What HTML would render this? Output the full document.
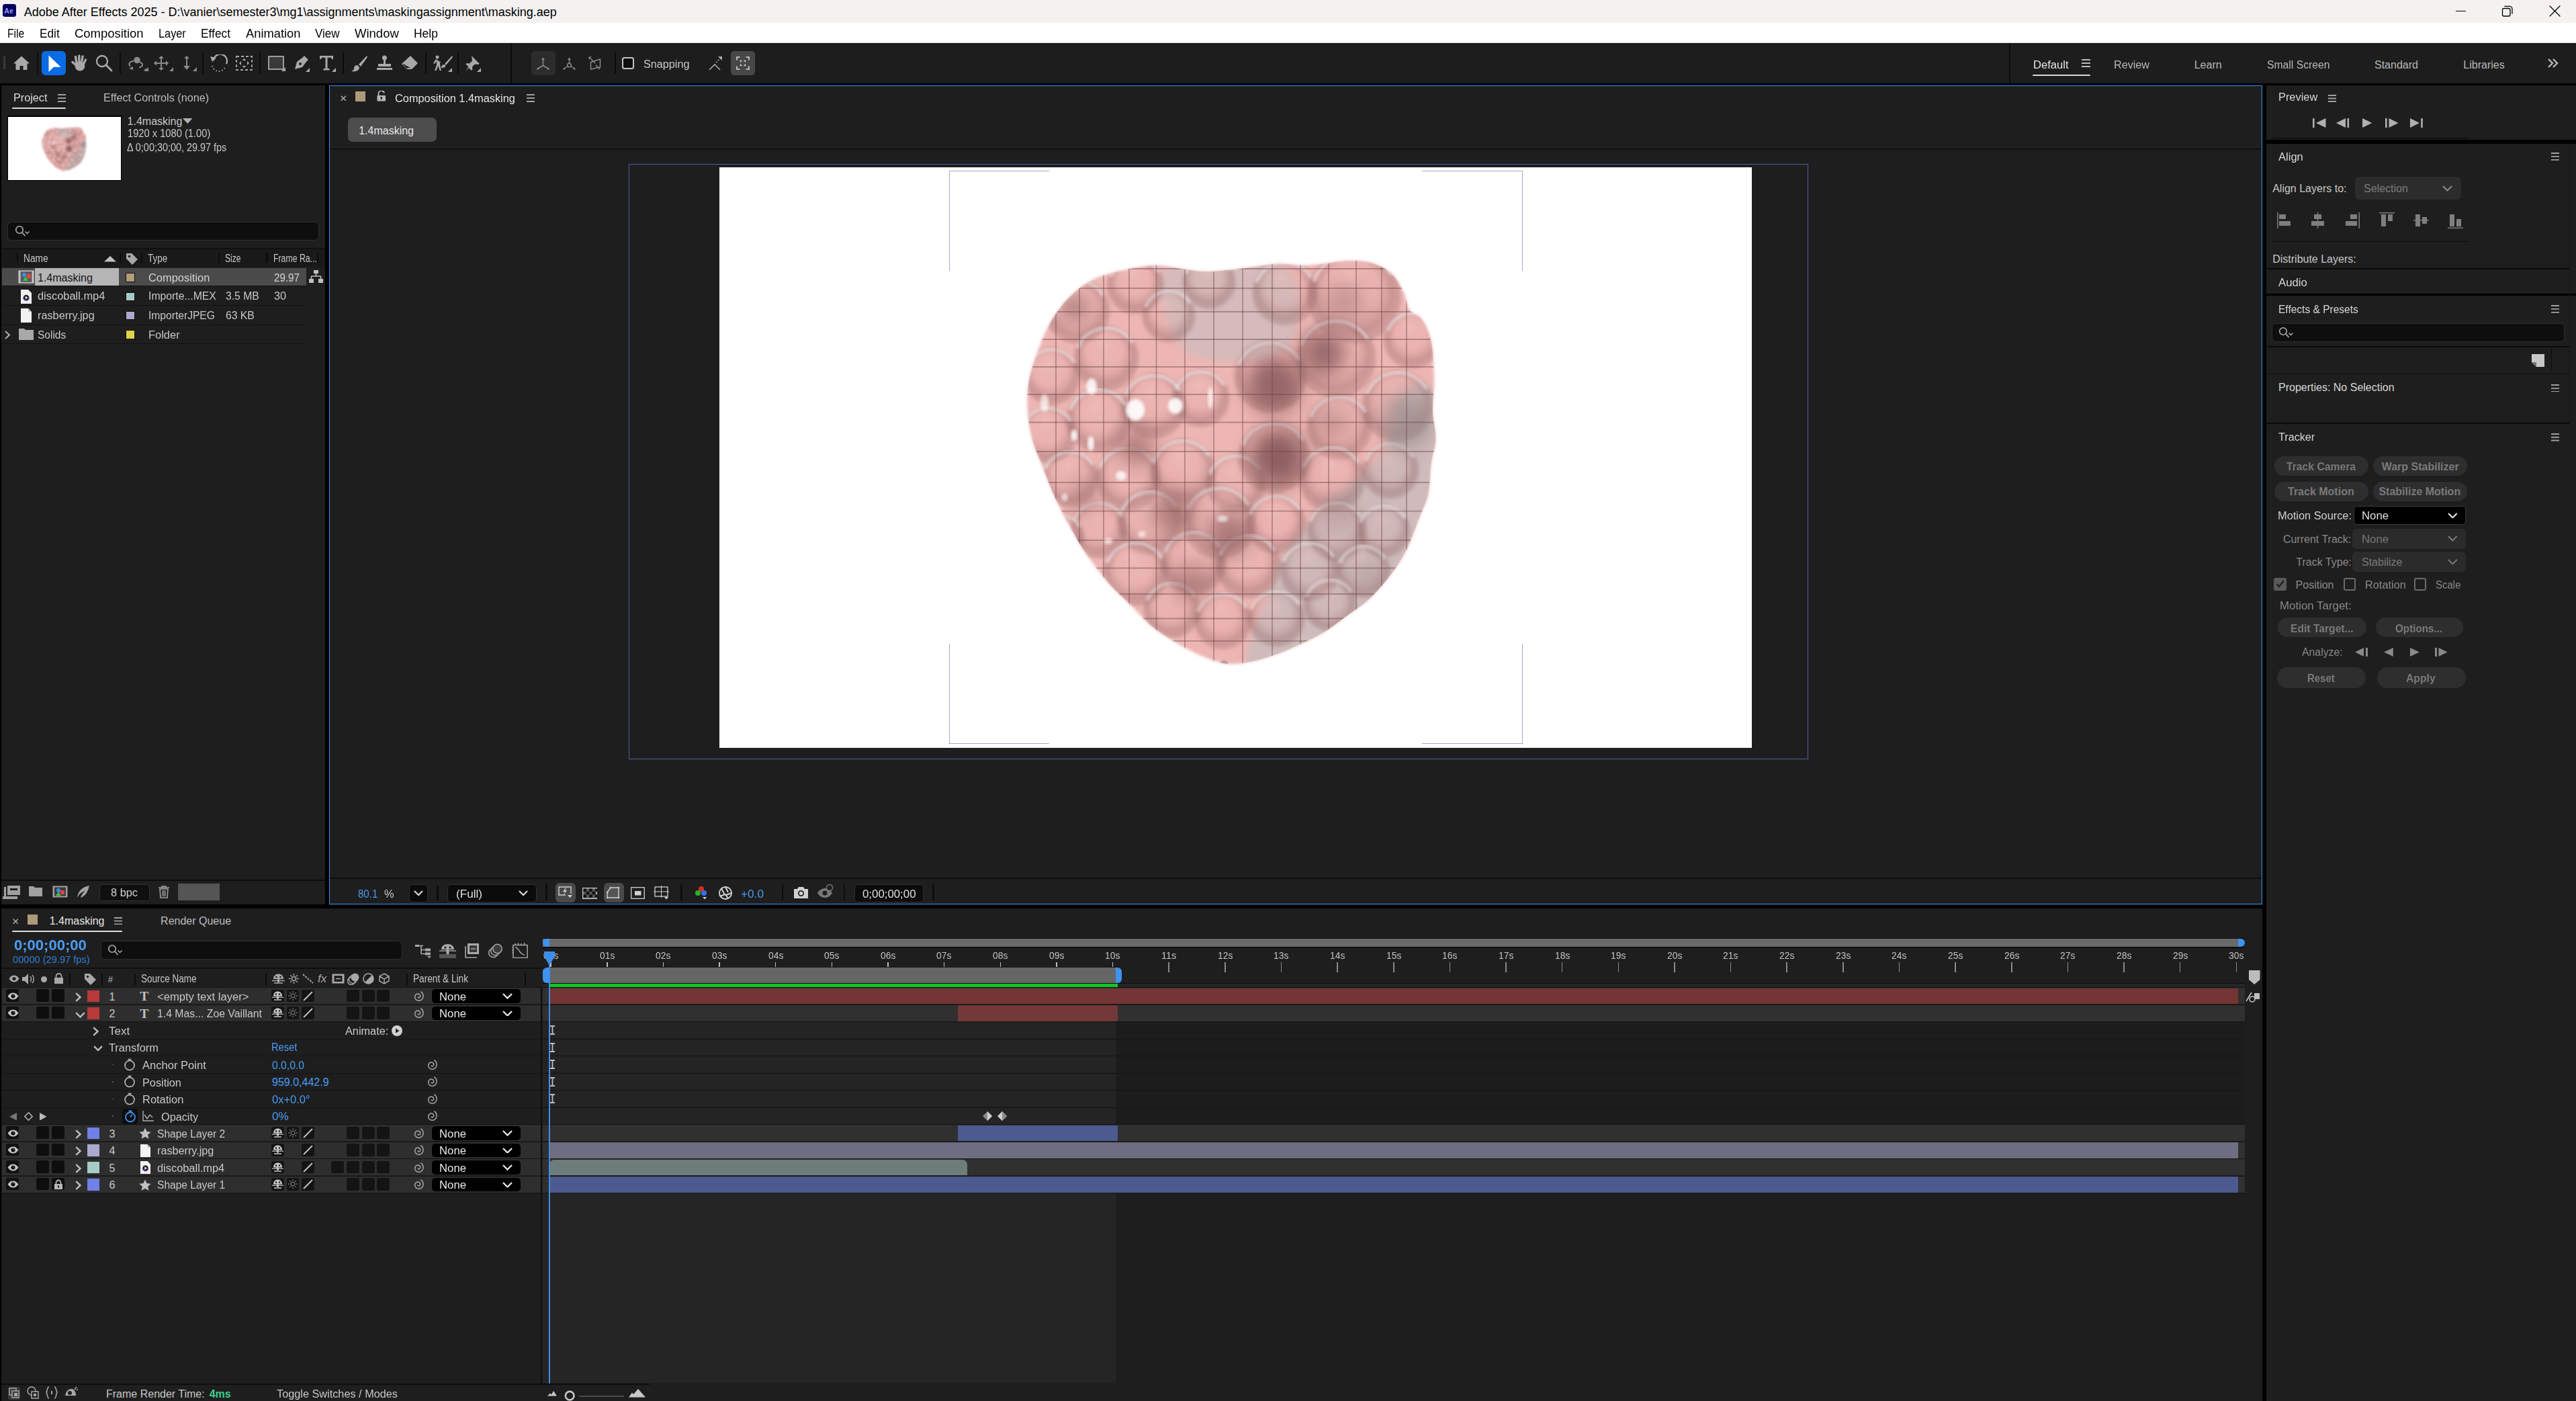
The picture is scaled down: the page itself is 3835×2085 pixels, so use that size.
<!DOCTYPE html><html><head><meta charset="utf-8"><style>
html,body{margin:0;padding:0;width:3835px;height:2085px;overflow:hidden;background:#000;}
body>div{position:absolute;}
body{font-family:"Liberation Sans",sans-serif;}
svg{position:absolute;}
</style></head><body>
<div style="left:0px;top:0px;width:3835px;height:2085px;background:#000;"></div>
<div style="left:0px;top:0px;width:3835px;height:34px;background:#f3f2f1;"></div>
<div style="left:0px;top:34px;width:3835px;height:30px;background:#ffffff;"></div>
<div style="left:0px;top:64px;width:3835px;height:60px;background:#1d1d1d;"></div>
<div style="left:4px;top:6px;width:20px;height:18.5px;background:#00005b;border-radius:3.5px;"></div>
<div style="left:6.3px;top:11px;font-size:10.5px;line-height:10.5px;color:#9999ff;white-space:pre;font-weight:bold;">Ae</div>
<div style="left:35.7px;top:9px;font-size:18px;line-height:18px;color:#000;white-space:pre;">Adobe After Effects 2025 - D:\vanier\semester3\mg1\assignments\maskingassignment\masking.aep</div>
<div style="left:3656px;top:15.8px;width:15.4px;height:1.3px;background:#000;"></div>
<svg style="left:3720px;top:5px;" width="26" height="24" viewBox="0 0 26 24"><rect x="5.5" y="7.5" width="11.5" height="11.5" rx="2" fill="none" stroke="#000" stroke-width="1.3"/><path d="M8.5 4.3h7.5a4 4 0 0 1 4 4v7.5" fill="none" stroke="#000" stroke-width="1.3"/></svg>
<svg style="left:3792px;top:5px;" width="24" height="24" viewBox="0 0 24 24"><path d="M4 4L19 19M19 4L4 19" stroke="#000" stroke-width="1.3" stroke-linecap="round"/></svg>
<div style="left:0px;top:62.2px;width:3835px;height:1.1px;background:#ebebeb;"></div>
<div style="left:11.4px;top:41px;font-size:18px;line-height:18px;color:#000;white-space:pre;transform:scaleX(0.8723);transform-origin:0 0;">File</div>
<div style="left:59.2px;top:41px;font-size:18px;line-height:18px;color:#000;white-space:pre;transform:scaleX(0.9576);transform-origin:0 0;">Edit</div>
<div style="left:111.4px;top:41px;font-size:18px;line-height:18px;color:#000;white-space:pre;transform:scaleX(1.0246);transform-origin:0 0;">Composition</div>
<div style="left:236.4px;top:41px;font-size:18px;line-height:18px;color:#000;white-space:pre;transform:scaleX(0.9062);transform-origin:0 0;">Layer</div>
<div style="left:298.9px;top:41px;font-size:18px;line-height:18px;color:#000;white-space:pre;transform:scaleX(0.9630);transform-origin:0 0;">Effect</div>
<div style="left:365.5px;top:41px;font-size:18px;line-height:18px;color:#000;white-space:pre;transform:scaleX(1.0183);transform-origin:0 0;">Animation</div>
<div style="left:469.3px;top:41px;font-size:18px;line-height:18px;color:#000;white-space:pre;transform:scaleX(0.9486);transform-origin:0 0;">View</div>
<div style="left:528.0px;top:41px;font-size:18px;line-height:18px;color:#000;white-space:pre;transform:scaleX(1.0278);transform-origin:0 0;">Window</div>
<div style="left:616.3px;top:41px;font-size:18px;line-height:18px;color:#000;white-space:pre;transform:scaleX(0.9698);transform-origin:0 0;">Help</div>
<svg style="left:5px;top:84px;" width="3" height="19" viewBox="0 0 3 19"><rect x="0" y="0.0" width="3" height="1.1" fill="#5a5a5a"/><rect x="0" y="2.3" width="3" height="1.1" fill="#5a5a5a"/><rect x="0" y="4.6" width="3" height="1.1" fill="#5a5a5a"/><rect x="0" y="6.8999999999999995" width="3" height="1.1" fill="#5a5a5a"/><rect x="0" y="9.2" width="3" height="1.1" fill="#5a5a5a"/><rect x="0" y="11.5" width="3" height="1.1" fill="#5a5a5a"/><rect x="0" y="13.799999999999999" width="3" height="1.1" fill="#5a5a5a"/><rect x="0" y="16.099999999999998" width="3" height="1.1" fill="#5a5a5a"/><rect x="0" y="18.4" width="3" height="1.1" fill="#5a5a5a"/></svg>
<svg style="left:19px;top:82px;" width="26" height="24" viewBox="0 0 26 24"><path d="M13 1.5L1 12.5h3.5V22h6v-6h5v6h6v-9.5H25z" fill="#a9a9a9"/></svg>
<div style="left:55px;top:78px;width:2px;height:32px;background:#0c0c0c;"></div>
<div style="left:62px;top:76px;width:36px;height:35.5px;background:#0b6be6;border-radius:6px;"></div>
<svg style="left:72px;top:82px;" width="19" height="26" viewBox="0 0 19 26"><path d="M0.5 0.5V25L8 17.8L18.5 17.8Z" fill="#fff"/></svg>
<svg style="left:105px;top:81px;" width="25" height="26" viewBox="0 0 25 26"><g stroke="#a9a9a9" stroke-linecap="round" fill="none"><path d="M9.5 17L3 11.5" stroke-width="3.6"/><path d="M9 13L7.5 3.5" stroke-width="3.4"/><path d="M12.8 13V2" stroke-width="3.4"/><path d="M16.2 13.5L18 3" stroke-width="3.4"/><path d="M18.5 16L22.5 8" stroke-width="3.2"/></g><ellipse cx="14" cy="17.5" rx="7.3" ry="7" fill="#a9a9a9"/></svg>
<svg style="left:142px;top:81px;" width="27" height="27" viewBox="0 0 27 27"><circle cx="10" cy="10" r="8" fill="none" stroke="#a9a9a9" stroke-width="2.3"/><path d="M16 16L24 24" stroke="#a9a9a9" stroke-width="2.8" stroke-linecap="round"/></svg>
<div style="left:178px;top:78px;width:2px;height:32px;background:#0c0c0c;"></div>
<svg style="left:190px;top:84px;" width="28" height="24" viewBox="0 0 28 24"><circle cx="14" cy="5.5" r="4.8" fill="#8a8a8a"/><path d="M9 7C2 7.5 1 12 4 14.5M18 8.5c6 2 5 7 -1 8" fill="none" stroke="#8a8a8a" stroke-width="2"/><path d="M2 18l6-3v5z" fill="#8a8a8a"/><path d="M24 21h4v-4z" fill="#8a8a8a"/></svg>
<svg style="left:229px;top:83px;" width="24" height="24" viewBox="0 0 24 24"><path d="M11 0l4 4h-3v6h6v-3l4 4-4 4v-3h-6v6h3l-4 4-4-4h3v-6H4v3L0 11l4-4v3h6V4H7z" fill="#8a8a8a"/></svg>
<svg style="left:252px;top:100px;" width="6" height="6" viewBox="0 0 6 6"><path d="M6 0v6H0z" fill="#8a8a8a"/></svg>
<svg style="left:270px;top:83px;" width="16" height="22" viewBox="0 0 16 22"><path d="M8 0l-4 4h3v11H3l5 6 5-6H9V4h3z" fill="#8a8a8a"/></svg>
<svg style="left:287px;top:100px;" width="6" height="6" viewBox="0 0 6 6"><path d="M6 0v6H0z" fill="#8a8a8a"/></svg>
<svg style="left:215px;top:100px;" width="6" height="6" viewBox="0 0 6 6"><path d="M6 0v6H0z" fill="#8a8a8a"/></svg>
<div style="left:301px;top:78px;width:2px;height:32px;background:#0c0c0c;"></div>
<svg style="left:313px;top:81px;" width="27" height="26" viewBox="0 0 27 26"><path d="M5 9A10 10 0 1 1 24 14" fill="none" stroke="#a9a9a9" stroke-width="2.4"/><path d="M0 3l9 2-6 6z" fill="#a9a9a9"/><path d="M3 17a10 10 0 0 0 19 2" fill="none" stroke="#a9a9a9" stroke-width="2" stroke-dasharray="1.5 3"/></svg>
<svg style="left:351px;top:83px;" width="26" height="23" viewBox="0 0 26 23"><rect x="1" y="1" width="23" height="20" fill="none" stroke="#a9a9a9" stroke-width="1.8" stroke-dasharray="4 3"/><path d="M12.5 4l3 3h-6zM12.5 18l3-3h-6zM5 11l3-3v6zM20 11l-3-3v6z" fill="#a9a9a9"/></svg>
<div style="left:386.4px;top:78px;width:2px;height:32px;background:#0c0c0c;"></div>
<svg style="left:399px;top:83px;" width="26" height="23" viewBox="0 0 26 23"><rect x="1" y="1" width="22" height="19" fill="#3a3a3a" stroke="#a9a9a9" stroke-width="1.8"/><path d="M26 17v6h-6z" fill="#a9a9a9"/></svg>
<svg style="left:436px;top:82px;" width="26" height="25" viewBox="0 0 26 25"><path d="M3 21L6 10 14 4 20 10 14 18zM14 4l3-3 6 6-3 3" fill="#a9a9a9"/><circle cx="11" cy="13" r="2" fill="#1d1d1d"/><path d="M25 19v6h-6z" fill="#a9a9a9"/></svg>
<svg style="left:475px;top:82px;" width="25" height="25" viewBox="0 0 25 25"><path d="M1 1h20v5h-2.5V3.8H12.5V20h3v2.5H6.5V20h3V3.8H3.5V6H1z" fill="#a9a9a9"/><path d="M25 19v6h-6z" fill="#a9a9a9"/></svg>
<div style="left:509.7px;top:78px;width:2px;height:32px;background:#0c0c0c;"></div>
<svg style="left:522px;top:82px;" width="26" height="25" viewBox="0 0 26 25"><path d="M24 1L12 14l3 3L25 3zM10 15c-4 0-5 3-5 5s-2 3-4 4c5 1 12 0 12-6z" fill="#a9a9a9"/></svg>
<svg style="left:559px;top:82px;" width="27" height="24" viewBox="0 0 27 24"><circle cx="13.5" cy="4" r="3.5" fill="#a9a9a9"/><path d="M12 7h3v6h8v4H4v-4h8zM2 19h23v3H2z" fill="#a9a9a9"/></svg>
<svg style="left:597px;top:82px;" width="26" height="25" viewBox="0 0 26 25"><path d="M14 1l11 11-9 9H9l-8-8zM3 13l6 6h5" fill="#a9a9a9"/><path d="M3.5 13.5L9.5 19.5" stroke="#1d1d1d" stroke-width="1.5"/></svg>
<div style="left:632.7px;top:78px;width:2px;height:32px;background:#0c0c0c;"></div>
<svg style="left:643px;top:82px;" width="31" height="25" viewBox="0 0 31 25"><circle cx="8" cy="3" r="2.5" fill="#a9a9a9"/><path d="M6 6l-4 6 2 1 3-4v6l-3 8h2.5l3-7 2 7h2.5L12 14V9l3 3" fill="#a9a9a9"/><path d="M30 1L19 13l2 2L31 3zM18 14c-3 0-4 3-4 5 4 0 7-1 6-4z" fill="#a9a9a9"/><path d="M30 19v6h-6z" fill="#a9a9a9"/></svg>
<div style="left:680.5px;top:78px;width:2px;height:32px;background:#0c0c0c;"></div>
<svg style="left:692px;top:82px;" width="24" height="25" viewBox="0 0 24 25"><path d="M10 1l12 12-3 1-4-0.5-4 4 0.5 4-1.5 1.5-4-4L1 24l4.5-6.5-4-4L3 12l4 0.5 4-4L10.5 4.5z" fill="#a9a9a9"/><path d="M24 19v6h-6z" fill="#a9a9a9"/></svg>
<div style="left:760px;top:64px;width:2px;height:60px;background:#0c0c0c;"></div>
<div style="left:791px;top:76.4px;width:36px;height:35.3px;background:#2c2c2c;border-radius:5px;"></div>
<svg style="left:798px;top:85px;" width="21" height="19" viewBox="0 0 21 19"><path d="M10.5 3v9.5M10.5 12.5L3 17M10.5 12.5L18 17" stroke="#8a8a8a" stroke-width="1.5" fill="none"/><path d="M10.5 0.5l-2.6 3.6h5.2zM0.5 18.5l4.2-0.3-1.6-3zM20.5 18.5l-4.2-0.3 1.6-3z" fill="#8a8a8a"/></svg>
<svg style="left:837px;top:85px;" width="21" height="19" viewBox="0 0 21 19"><circle cx="10.5" cy="12" r="2.8" fill="none" stroke="#8a8a8a" stroke-width="1.5"/><path d="M10.5 3v6.2M8 13.5L3 17M13 13.5L18 17" stroke="#8a8a8a" stroke-width="1.5" fill="none"/><path d="M10.5 0.5l-2.6 3.6h5.2zM0.5 18.5l4.2-0.3-1.6-3zM20.5 18.5l-4.2-0.3 1.6-3z" fill="#8a8a8a"/></svg>
<svg style="left:876px;top:84px;" width="20" height="20" viewBox="0 0 20 20"><path d="M3.5 8.5L17.5 4v12L3.5 19zM3 3l7 7M11 13l6 6" stroke="#8a8a8a" stroke-width="1.5" fill="none"/><path d="M0.5 0.5h4.5l-4.5 4.5z" fill="#8a8a8a"/></svg>
<div style="left:914.6px;top:78px;width:2px;height:32px;background:#0c0c0c;"></div>
<div style="left:926px;top:85px;width:17.6px;height:17.6px;background:#0e0e0e;border:2.6px solid #c4c4c4;border-radius:3.5px;box-sizing:border-box;"></div>
<div style="left:957.6px;top:88px;font-size:16px;line-height:16px;color:#c8c8c8;white-space:pre;transform:scaleX(1.0131);transform-origin:0 0;">Snapping</div>
<svg style="left:1054px;top:83px;" width="22" height="22" viewBox="0 0 22 22"><path d="M2 21L10 13L18 21" fill="none" stroke="#a9a9a9" stroke-width="1.6"/><path d="M12 10l7-7" stroke="#a9a9a9" stroke-width="1.6" stroke-dasharray="2 2"/><path d="M21 1h-6l6 6z" fill="#a9a9a9"/></svg>
<div style="left:1088px;top:76.4px;width:36px;height:35.3px;background:#474747;border-radius:5px;"></div>
<svg style="left:1095px;top:83px;" width="22" height="22" viewBox="0 0 22 22"><path d="M2 6.5V2h4.5M15.5 2H20v4.5M20 15.5V20h-4.5M6.5 20H2v-4.5" fill="none" stroke="#d8d8d8" stroke-width="1.6"/><path d="M7.5 9.5v-2h2M12.5 7.5h2v2M14.5 12.5v2h-2M9.5 14.5h-2v-2" fill="none" stroke="#d8d8d8" stroke-width="1.4"/></svg>
<div style="left:2991px;top:64px;width:2px;height:60px;background:#0c0c0c;"></div>
<div style="left:3027.3px;top:89px;font-size:16px;line-height:16px;color:#e6e6e6;white-space:pre;transform:scaleX(1.0357);transform-origin:0 0;">Default</div>
<svg style="left:3099px;top:88px;" width="14" height="13" viewBox="0 0 14 13"><path d="M0 1h13M0 6h13M0 11h13" stroke="#bbb" stroke-width="1.8"/></svg>
<div style="left:3025.6px;top:110.8px;width:86.5px;height:2.6px;background:#d8d8d8;border-radius:1.3px;"></div>
<div style="left:3146.8px;top:89px;font-size:16px;line-height:16px;color:#b8b8b8;white-space:pre;transform:scaleX(1.0103);transform-origin:0 0;">Review</div>
<div style="left:3266.7px;top:89px;font-size:16px;line-height:16px;color:#b8b8b8;white-space:pre;">Learn</div>
<div style="left:3375.0px;top:89px;font-size:16px;line-height:16px;color:#b8b8b8;white-space:pre;transform:scaleX(0.9827);transform-origin:0 0;">Small Screen</div>
<div style="left:3535.0px;top:89px;font-size:16px;line-height:16px;color:#b8b8b8;white-space:pre;">Standard</div>
<div style="left:3667.3px;top:89px;font-size:16px;line-height:16px;color:#b8b8b8;white-space:pre;">Libraries</div>
<svg style="left:3792px;top:87px;" width="18" height="14" viewBox="0 0 18 14"><path d="M2 1l6 6-6 6M9 1l6 6-6 6" fill="none" stroke="#b8b8b8" stroke-width="2.4"/></svg>
<div style="left:2px;top:127px;width:482px;height:1219px;background:#1e1e1e;"></div>
<div style="left:490px;top:127px;width:2878px;height:1219px;background:#1e1e1e;"></div>
<div style="left:3374px;top:127px;width:461px;height:81px;background:#1e1e1e;"></div>
<div style="left:3374px;top:214px;width:461px;height:1871px;background:#1e1e1e;"></div>
<div style="left:2px;top:1352px;width:3366px;height:733px;background:#1e1e1e;"></div>
<div style="left:20.4px;top:138px;font-size:16px;line-height:16px;color:#dcdcdc;white-space:pre;transform:scaleX(1.0121);transform-origin:0 0;">Project</div>
<svg style="left:86px;top:140px;" width="12" height="12" viewBox="0 0 12 12"><path d="M0 1h12M0 6.0h12M0 11h12" stroke="#a0a0a0" stroke-width="1.8"/></svg>
<div style="left:18px;top:160.2px;width:80px;height:2px;background:#d8d8d8;border-radius:1px;"></div>
<div style="left:154.0px;top:138px;font-size:16px;line-height:16px;color:#bdbdbd;white-space:pre;transform:scaleX(1.0108);transform-origin:0 0;">Effect Controls (none)</div>
<div style="left:10.8px;top:172px;width:170.2px;height:97px;background:#000;"></div>
<div style="left:12px;top:173.5px;width:168px;height:94.2px;background:#fff;"></div>
<div style="left:189.6px;top:173px;font-size:16px;line-height:16px;color:#c8c8c8;white-space:pre;">1.4masking</div>
<svg style="left:272px;top:176px;" width="15" height="9" viewBox="0 0 15 9"><path d="M0 0h14.5L7.25 8z" fill="#b0b0b0"/></svg>
<div style="left:189.6px;top:191px;font-size:16px;line-height:16px;color:#c8c8c8;white-space:pre;transform:scaleX(0.9180);transform-origin:0 0;">1920 x 1080 (1.00)</div>
<div style="left:189.3px;top:212px;font-size:16px;line-height:16px;color:#c8c8c8;white-space:pre;transform:scaleX(0.9011);transform-origin:0 0;">Δ 0;00;30;00, 29.97 fps</div>
<div style="left:11.4px;top:330px;width:463.2px;height:28px;background:#0e0e0e;border:1px solid #2e2e2e;border-radius:6px;box-sizing:border-box;"></div>
<svg style="left:21.9px;top:335px;" width="24" height="18" viewBox="0 0 24 18"><circle cx="7" cy="7" r="5.3" fill="none" stroke="#b0b0b0" stroke-width="1.6"/><path d="M11 11l4.5 5" stroke="#b0b0b0" stroke-width="1.8"/><path d="M15.5 9.5l3 3 3-3" fill="none" stroke="#b0b0b0" stroke-width="1.4"/></svg>
<div style="left:3px;top:369px;width:481px;height:1.5px;background:#111;"></div>
<div style="left:3px;top:370.5px;width:481px;height:26.5px;background:#191919;"></div>
<div style="left:24.5px;top:377px;width:2.4px;height:14px;background:#0c0c0c;"></div>
<div style="left:177.60000000000002px;top:377px;width:2.4px;height:14px;background:#0c0c0c;"></div>
<div style="left:209.60000000000002px;top:377px;width:2.4px;height:14px;background:#0c0c0c;"></div>
<div style="left:324.8px;top:377px;width:2.4px;height:14px;background:#0c0c0c;"></div>
<div style="left:396.40000000000003px;top:377px;width:2.4px;height:14px;background:#0c0c0c;"></div>
<div style="left:471.5px;top:377px;width:2.4px;height:14px;background:#0c0c0c;"></div>
<div style="left:34.8px;top:377px;font-size:16px;line-height:16px;color:#c8c8c8;white-space:pre;transform:scaleX(0.8553);transform-origin:0 0;">Name</div>
<svg style="left:154.5px;top:381px;" width="18" height="9" viewBox="0 0 18 9"><path d="M0 8.5L9 0l9 8.5z" fill="#c0c0c0"/></svg>
<svg style="left:187px;top:376px;" width="19" height="19" viewBox="0 0 19 19"><path d="M1 1h8l9 9-8 8-9-9z" fill="#a8a8a8"/><circle cx="5.5" cy="5.5" r="1.7" fill="#191919"/></svg>
<div style="left:219.7px;top:377px;font-size:16px;line-height:16px;color:#c8c8c8;white-space:pre;transform:scaleX(0.8390);transform-origin:0 0;">Type</div>
<div style="left:334.8px;top:377px;font-size:16px;line-height:16px;color:#c8c8c8;white-space:pre;transform:scaleX(0.7518);transform-origin:0 0;">Size</div>
<div style="left:407.0px;top:377px;font-size:16px;line-height:16px;color:#c8c8c8;white-space:pre;transform:scaleX(0.7673);transform-origin:0 0;">Frame Ra...</div>
<div style="left:3.4px;top:399px;width:453.1px;height:26.6px;background:#4b4b4b;"></div>
<div style="left:52.3px;top:399px;width:124.7px;height:26.6px;background:#b5b5b5;"></div>
<div style="left:3.4px;top:424.90000000000003px;width:453.1px;height:1.4px;background:#111;"></div>
<div style="left:3.4px;top:453.5px;width:453.1px;height:1.4px;background:#111;"></div>
<div style="left:3.4px;top:482.90000000000003px;width:453.1px;height:1.4px;background:#111;"></div>
<div style="left:3.4px;top:510.5px;width:453.1px;height:1.4px;background:#111;"></div>
<svg style="left:27px;top:401.5px;" width="24" height="20" viewBox="0 0 24 20"><rect x="0.5" y="0.5" width="23" height="19" fill="#c8c8c8" stroke="#8a8a8a"/><rect x="3.5" y="2" width="17" height="16" fill="#5a5a5a"/><circle cx="9" cy="7" r="3" fill="#3b8fe8"/><path d="M13 6h6v6h-6z" fill="#e04444"/><path d="M11 9l-4 7h8z" fill="#3bbf4a"/></svg>
<svg style="left:31px;top:430.8px;" width="16" height="21" viewBox="0 0 16 21"><path d="M0 0h11l5 5v16H0z" fill="#f0f0f0"/><circle cx="8" cy="12" r="4.3" fill="#222"/><path d="M6.8 9.8v4.4l3.5-2.2z" fill="#fff"/><path d="M3.6 12a4.4 4.4 0 0 0 8.8 0" fill="none" stroke="#7a4ad8" stroke-width="1.3"/></svg>
<svg style="left:31px;top:459px;" width="16" height="21" viewBox="0 0 16 21"><path d="M0 0h11l5 5v16H0z" fill="#f2f2f2"/><path d="M11 0v5h5" fill="#bdbdbd"/></svg>
<svg style="left:7px;top:492px;" width="9" height="13" viewBox="0 0 9 13"><path d="M1 1l6 5.5-6 5.5" fill="none" stroke="#b0b0b0" stroke-width="2"/></svg>
<svg style="left:28px;top:487px;" width="22" height="19" viewBox="0 0 22 19"><path d="M0 2h8l2 2h12v15H0z" fill="#a8a8a8"/></svg>
<div style="left:187.4px;top:405.6px;width:13.6px;height:14.899999999999977px;background:#b39e7b;border:1px solid #111;box-sizing:border-box;"></div>
<div style="left:187.4px;top:434.6px;width:13.6px;height:13.899999999999977px;background:#a6cbc6;border:1px solid #111;box-sizing:border-box;"></div>
<div style="left:187.4px;top:463px;width:13.6px;height:13.399999999999977px;background:#aaaad0;border:1px solid #111;box-sizing:border-box;"></div>
<div style="left:187.4px;top:491.3px;width:13.6px;height:13.699999999999989px;background:#ddd24a;border:1px solid #111;box-sizing:border-box;"></div>
<div style="left:56.0px;top:406px;font-size:16px;line-height:16px;color:#141414;white-space:pre;">1.4masking</div>
<div style="left:220.7px;top:406px;font-size:16px;line-height:16px;color:#d4d4d4;white-space:pre;transform:scaleX(1.0267);transform-origin:0 0;">Composition</div>
<div style="left:408.0px;top:406px;font-size:16px;line-height:16px;color:#d4d4d4;white-space:pre;transform:scaleX(0.9492);transform-origin:0 0;">29.97</div>
<svg style="left:460px;top:402px;" width="21" height="20" viewBox="0 0 21 20"><rect x="7" y="0" width="7" height="5" fill="#c0c0c0"/><path d="M10.5 5v4M3.5 9h14M3.5 9v4M17.5 9v4" stroke="#c0c0c0" stroke-width="1.6" fill="none"/><rect x="0" y="13" width="7" height="6" fill="#c0c0c0"/><rect x="14" y="13" width="7" height="6" fill="#c0c0c0"/></svg>
<div style="left:55.7px;top:433px;font-size:16px;line-height:16px;color:#c8c8c8;white-space:pre;transform:scaleX(1.0253);transform-origin:0 0;">discoball.mp4</div>
<div style="left:220.7px;top:433px;font-size:16px;line-height:16px;color:#c8c8c8;white-space:pre;transform:scaleX(0.9859);transform-origin:0 0;">Importe...MEX</div>
<div style="left:336.3px;top:433px;font-size:16px;line-height:16px;color:#c8c8c8;white-space:pre;transform:scaleX(0.9825);transform-origin:0 0;">3.5 MB</div>
<div style="left:408.0px;top:433px;font-size:16px;line-height:16px;color:#c8c8c8;white-space:pre;transform:scaleX(1.0115);transform-origin:0 0;">30</div>
<div style="left:55.7px;top:462px;font-size:16px;line-height:16px;color:#c8c8c8;white-space:pre;transform:scaleX(1.0170);transform-origin:0 0;">rasberry.jpg</div>
<div style="left:220.7px;top:462px;font-size:16px;line-height:16px;color:#c8c8c8;white-space:pre;transform:scaleX(0.9758);transform-origin:0 0;">ImporterJPEG</div>
<div style="left:335.7px;top:462px;font-size:16px;line-height:16px;color:#c8c8c8;white-space:pre;transform:scaleX(0.9820);transform-origin:0 0;">63 KB</div>
<div style="left:55.7px;top:491px;font-size:16px;line-height:16px;color:#c8c8c8;white-space:pre;transform:scaleX(0.9684);transform-origin:0 0;">Solids</div>
<div style="left:220.7px;top:491px;font-size:16px;line-height:16px;color:#c8c8c8;white-space:pre;transform:scaleX(1.0276);transform-origin:0 0;">Folder</div>
<div style="left:2px;top:1309px;width:482px;height:1.5px;background:#0c0c0c;"></div>
<svg style="left:4px;top:1316px;" width="27" height="24" viewBox="0 0 27 24"><path d="M2 4h3v16H2zM7 2h19v14H7z" fill="#a0a0a0"/><rect x="11" y="6" width="11" height="3" fill="#1e1e1e"/><path d="M0 18h22v4H0z" fill="#a0a0a0"/></svg>
<svg style="left:43px;top:1318px;" width="20" height="16" viewBox="0 0 20 16"><path d="M0 1h7l2 2h11v13H0z" fill="#a0a0a0"/></svg>
<svg style="left:78px;top:1318px;" width="23" height="18" viewBox="0 0 23 18"><rect x="0.5" y="0.5" width="22" height="17" fill="#a0a0a0"/><rect x="3" y="2.5" width="17" height="13" fill="#3a3a3a"/><circle cx="9" cy="7" r="3" fill="#3b8fe8"/><rect x="12" y="7" width="6" height="6" fill="#e04444"/><path d="M9 9l-4 6h8z" fill="#3bbf4a"/></svg>
<svg style="left:114px;top:1318px;" width="20" height="19" viewBox="0 0 20 19"><path d="M19 0C8 2 2 8 1 18c3-6 7-9 12-10c-4 3-6 6-7 10c7-2 11-9 13-18z" fill="#a0a0a0"/></svg>
<div style="left:148px;top:1315.8px;width:74.8px;height:25.2px;background:#0f0f0f;border:1px solid #303030;border-radius:5px;box-sizing:border-box;"></div>
<div style="left:165.0px;top:1321px;font-size:16px;line-height:16px;color:#d0d0d0;white-space:pre;transform:scaleX(1.0220);transform-origin:0 0;">8 bpc</div>
<svg style="left:235px;top:1318px;" width="18" height="19" viewBox="0 0 18 19"><path d="M1 3h16M6 3V1h6v2M3 5h12l-1 13H4z" fill="none" stroke="#a0a0a0" stroke-width="1.6"/><path d="M7 7v9M9 7v9M11 7v9" stroke="#a0a0a0" stroke-width="1.2"/></svg>
<div style="left:265px;top:1315px;width:62px;height:25px;background:#555555;"></div>
<div style="left:490px;top:127px;width:2878px;height:1219px;border:1.4px solid #3f91ef;box-sizing:border-box;"></div>
<svg style="left:507px;top:142.4px;" width="8.5" height="8.5" viewBox="0 0 8.5 8.5"><path d="M0.7 0.7L7.8 7.8M7.8 0.7L0.7 7.8" stroke="#b0b0b0" stroke-width="1.5"/></svg>
<div style="left:528.8px;top:136px;width:15.2px;height:15px;background:#ad9a7b;"></div>
<svg style="left:560.5px;top:135px;" width="13.5" height="16" viewBox="0 0 13.5 16"><path d="M2.5 7V4.5a4.3 4.3 0 0 1 8.5-1" fill="none" stroke="#b8b8b8" stroke-width="1.8"/><rect x="0.5" y="7" width="12.5" height="8.5" rx="1" fill="#b8b8b8"/><circle cx="6.7" cy="10.5" r="1.5" fill="#1e1e1e"/><path d="M6 11h1.4v2.5H6z" fill="#1e1e1e"/></svg>
<div style="left:587.6px;top:139px;font-size:16px;line-height:16px;color:#e6e6e6;white-space:pre;transform:scaleX(1.0212);transform-origin:0 0;">Composition 1.4masking</div>
<svg style="left:784px;top:140px;" width="12" height="12" viewBox="0 0 12 12"><path d="M0 1h12M0 6.0h12M0 11h12" stroke="#a0a0a0" stroke-width="1.8"/></svg>
<div style="left:518px;top:175px;width:132px;height:36px;background:#4d4d4d;border-radius:7px;"></div>
<div style="left:534.2px;top:187px;font-size:16px;line-height:16px;color:#e8e8e8;white-space:pre;">1.4masking</div>
<div style="left:491.4px;top:221px;width:2875.2px;height:1.5px;background:#101010;"></div>
<div style="left:936px;top:244.3px;width:1756px;height:885.7px;border:1.5px solid #525d9e;border-top-width:1.8px;box-sizing:border-box;"></div>
<div style="left:1071px;top:249px;width:1537px;height:864px;background:#ffffff;"></div>
<div style="left:1413px;top:254px;width:148.5px;height:1.2px;background:#a7a7d2;"></div>
<div style="left:1413px;top:254px;width:1.2px;height:148.5px;background:#a7a7d2;"></div>
<div style="left:2117px;top:254px;width:150.3px;height:1.2px;background:#a7a7d2;"></div>
<div style="left:2266px;top:254px;width:1.2px;height:148.5px;background:#a7a7d2;"></div>
<div style="left:1413px;top:1106.3px;width:148.5px;height:1.2px;background:#a7a7d2;"></div>
<div style="left:1413px;top:958px;width:1.2px;height:149.5px;background:#a7a7d2;"></div>
<div style="left:2117px;top:1106.3px;width:150.3px;height:1.2px;background:#a7a7d2;"></div>
<div style="left:2266px;top:958px;width:1.2px;height:149.5px;background:#a7a7d2;"></div>
<svg style="left:1500px;top:370px" width="660" height="650" viewBox="1500 370 660 650"><defs><clipPath id="bc"><path d="M1529.7 607.5C1528.9 593.0 1529.3 580.9 1532.0 566.4C1534.7 551.9 1540.4 535.3 1545.7 520.8C1551.0 506.3 1556.4 492.6 1564.0 479.6C1571.6 466.6 1580.7 453.6 1591.4 443.0C1602.1 432.4 1614.3 422.5 1628.0 415.7C1641.7 408.9 1658.4 405.4 1673.6 402.0C1688.8 398.6 1705.6 395.4 1719.3 395.0C1733.0 394.6 1743.6 398.1 1755.8 399.7C1768.0 401.2 1780.2 403.9 1792.4 404.3C1804.6 404.7 1816.8 403.1 1829.0 402.0C1841.2 400.9 1853.3 398.9 1865.5 397.4C1877.7 395.9 1889.8 393.2 1902.0 392.8C1914.2 392.4 1927.2 395.0 1938.6 395.0C1950.0 395.0 1959.8 393.9 1970.5 392.8C1981.2 391.7 1991.1 388.7 2002.5 388.3C2013.9 387.9 2027.6 387.6 2039.0 390.6C2050.4 393.6 2062.6 399.3 2071.0 406.5C2079.4 413.7 2084.7 424.9 2089.3 434.0C2093.9 443.1 2093.8 454.6 2098.4 461.4C2103.0 468.2 2111.4 467.4 2116.7 475.0C2122.0 482.6 2127.3 492.5 2130.4 507.0C2133.5 521.5 2134.6 544.4 2135.0 561.9C2135.4 579.4 2132.3 596.8 2132.7 612.0C2133.1 627.2 2137.7 640.2 2137.3 653.2C2136.9 666.2 2132.3 676.1 2130.4 689.8C2128.5 703.5 2129.0 721.8 2126.0 735.5C2123.0 749.2 2117.5 758.3 2112.2 772.0C2106.9 785.7 2100.9 804.0 2094.0 817.7C2087.1 831.4 2080.2 842.1 2071.0 854.3C2061.8 866.5 2050.4 880.1 2039.0 890.8C2027.6 901.4 2013.9 909.8 2002.5 918.2C1991.1 926.6 1981.9 934.1 1970.5 941.0C1959.1 947.9 1945.4 954.0 1934.0 959.3C1922.6 964.6 1913.4 968.9 1902.0 973.0C1890.6 977.1 1877.7 981.5 1865.5 984.0C1853.3 986.5 1841.2 989.0 1829.0 988.0C1816.8 987.0 1804.6 982.5 1792.4 977.7C1780.2 972.9 1768.8 966.9 1755.8 959.3C1742.8 951.7 1726.9 941.8 1714.7 931.9C1702.5 922.0 1693.4 910.5 1682.7 899.9C1672.0 889.2 1661.4 880.2 1650.7 868.0C1640.0 855.8 1628.7 841.3 1618.8 826.8C1608.9 812.3 1599.8 796.2 1591.4 781.0C1583.0 765.8 1575.3 750.7 1568.5 735.5C1561.7 720.3 1555.6 703.5 1550.3 689.8C1545.0 676.1 1540.0 666.9 1536.6 653.2C1533.2 639.5 1530.5 622.0 1529.7 607.5Z"/></clipPath><filter id="bl4" x="-50%" y="-50%" width="200%" height="200%"><feGaussianBlur stdDeviation="14"/></filter><filter id="bl2" x="-50%" y="-50%" width="200%" height="200%"><feGaussianBlur stdDeviation="6"/></filter><filter id="bl1" x="-10%" y="-10%" width="120%" height="120%"><feGaussianBlur stdDeviation="2.2"/></filter><filter id="bl05"><feGaussianBlur stdDeviation="0.8"/></filter></defs><g id="berry"><path d="M1529.7 607.5C1528.9 593.0 1529.3 580.9 1532.0 566.4C1534.7 551.9 1540.4 535.3 1545.7 520.8C1551.0 506.3 1556.4 492.6 1564.0 479.6C1571.6 466.6 1580.7 453.6 1591.4 443.0C1602.1 432.4 1614.3 422.5 1628.0 415.7C1641.7 408.9 1658.4 405.4 1673.6 402.0C1688.8 398.6 1705.6 395.4 1719.3 395.0C1733.0 394.6 1743.6 398.1 1755.8 399.7C1768.0 401.2 1780.2 403.9 1792.4 404.3C1804.6 404.7 1816.8 403.1 1829.0 402.0C1841.2 400.9 1853.3 398.9 1865.5 397.4C1877.7 395.9 1889.8 393.2 1902.0 392.8C1914.2 392.4 1927.2 395.0 1938.6 395.0C1950.0 395.0 1959.8 393.9 1970.5 392.8C1981.2 391.7 1991.1 388.7 2002.5 388.3C2013.9 387.9 2027.6 387.6 2039.0 390.6C2050.4 393.6 2062.6 399.3 2071.0 406.5C2079.4 413.7 2084.7 424.9 2089.3 434.0C2093.9 443.1 2093.8 454.6 2098.4 461.4C2103.0 468.2 2111.4 467.4 2116.7 475.0C2122.0 482.6 2127.3 492.5 2130.4 507.0C2133.5 521.5 2134.6 544.4 2135.0 561.9C2135.4 579.4 2132.3 596.8 2132.7 612.0C2133.1 627.2 2137.7 640.2 2137.3 653.2C2136.9 666.2 2132.3 676.1 2130.4 689.8C2128.5 703.5 2129.0 721.8 2126.0 735.5C2123.0 749.2 2117.5 758.3 2112.2 772.0C2106.9 785.7 2100.9 804.0 2094.0 817.7C2087.1 831.4 2080.2 842.1 2071.0 854.3C2061.8 866.5 2050.4 880.1 2039.0 890.8C2027.6 901.4 2013.9 909.8 2002.5 918.2C1991.1 926.6 1981.9 934.1 1970.5 941.0C1959.1 947.9 1945.4 954.0 1934.0 959.3C1922.6 964.6 1913.4 968.9 1902.0 973.0C1890.6 977.1 1877.7 981.5 1865.5 984.0C1853.3 986.5 1841.2 989.0 1829.0 988.0C1816.8 987.0 1804.6 982.5 1792.4 977.7C1780.2 972.9 1768.8 966.9 1755.8 959.3C1742.8 951.7 1726.9 941.8 1714.7 931.9C1702.5 922.0 1693.4 910.5 1682.7 899.9C1672.0 889.2 1661.4 880.2 1650.7 868.0C1640.0 855.8 1628.7 841.3 1618.8 826.8C1608.9 812.3 1599.8 796.2 1591.4 781.0C1583.0 765.8 1575.3 750.7 1568.5 735.5C1561.7 720.3 1555.6 703.5 1550.3 689.8C1545.0 676.1 1540.0 666.9 1536.6 653.2C1533.2 639.5 1530.5 622.0 1529.7 607.5Z" fill="#eeb6b3" filter="url(#bl1)"/><g clip-path="url(#bc)"><path d="M2080.0 600.0C2088.8 583.8 2105.0 570.0 2115.0 570.0C2125.0 570.0 2135.8 578.3 2140.0 600.0C2144.2 621.7 2145.0 666.7 2140.0 700.0C2135.0 733.3 2125.0 766.7 2110.0 800.0C2095.0 833.3 2076.7 870.0 2050.0 900.0C2023.3 930.0 1981.7 963.3 1950.0 980.0C1918.3 996.7 1874.2 1006.7 1860.0 1000.0C1845.8 993.3 1860.3 959.3 1865.0 940.0C1869.7 920.7 1880.3 903.3 1888.0 884.0C1895.7 864.7 1899.5 843.2 1911.0 824.0C1922.5 804.8 1939.5 787.2 1957.0 769.0C1974.5 750.8 1998.5 732.0 2016.0 715.0C2033.5 698.0 2051.3 686.2 2062.0 667.0C2072.7 647.8 2071.2 616.2 2080.0 600.0Z" fill="#c9bcbc" filter="url(#bl2)" opacity="0.85"/><path d="M1740.0 400.0C1767.5 387.5 1867.5 385.0 1900.0 395.0C1932.5 405.0 1935.0 437.5 1935.0 460.0C1935.0 482.5 1925.8 518.3 1900.0 530.0C1874.2 541.7 1807.5 540.0 1780.0 530.0C1752.5 520.0 1741.7 491.7 1735.0 470.0C1728.3 448.3 1712.5 412.5 1740.0 400.0Z" fill="#cdbdbd" filter="url(#bl2)" opacity="0.75"/><radialGradient id="dg" cx="0.5" cy="0.5" r="0.5" fx="0.45" fy="0.25"><stop offset="0" stop-color="#f4c8c6" stop-opacity="0.3"/><stop offset="0.5" stop-color="#d09a9a" stop-opacity="0.1"/><stop offset="0.82" stop-color="#8a5a5b" stop-opacity="0.36"/><stop offset="1" stop-color="#7a4e50" stop-opacity="0.2"/></radialGradient><circle cx="1603.7" cy="462.7" r="49" fill="url(#dg)" filter="url(#bl1)"/><circle cx="1690.5" cy="424.8" r="43" fill="url(#dg)" filter="url(#bl1)"/><circle cx="1913" cy="435.6" r="49" fill="url(#dg)" filter="url(#bl1)"/><circle cx="2016" cy="441" r="70" fill="url(#dg)" filter="url(#bl1)"/><circle cx="2102.8" cy="506" r="43" fill="url(#dg)" filter="url(#bl1)"/><circle cx="1565.8" cy="560" r="43" fill="url(#dg)" filter="url(#bl1)"/><circle cx="1647" cy="533" r="49" fill="url(#dg)" filter="url(#bl1)"/><circle cx="1891" cy="560" r="54" fill="url(#dg)" filter="url(#bl1)"/><circle cx="1989" cy="533" r="60" fill="url(#dg)" filter="url(#bl1)"/><circle cx="2081" cy="604" r="54" fill="url(#dg)" filter="url(#bl1)"/><circle cx="1560" cy="647" r="43" fill="url(#dg)" filter="url(#bl1)"/><circle cx="1636" cy="625" r="49" fill="url(#dg)" filter="url(#bl1)"/><circle cx="1717.7" cy="604" r="49" fill="url(#dg)" filter="url(#bl1)"/><circle cx="1788" cy="593" r="43" fill="url(#dg)" filter="url(#bl1)"/><circle cx="1896.7" cy="680" r="54" fill="url(#dg)" filter="url(#bl1)"/><circle cx="1994" cy="636" r="49" fill="url(#dg)" filter="url(#bl1)"/><circle cx="1593" cy="712" r="43" fill="url(#dg)" filter="url(#bl1)"/><circle cx="1679.7" cy="712" r="49" fill="url(#dg)" filter="url(#bl1)"/><circle cx="1761" cy="701" r="49" fill="url(#dg)" filter="url(#bl1)"/><circle cx="1840" cy="720" r="45" fill="url(#dg)" filter="url(#bl1)"/><circle cx="1983" cy="712" r="50" fill="url(#dg)" filter="url(#bl1)"/><circle cx="2070" cy="700" r="43" fill="url(#dg)" filter="url(#bl1)"/><circle cx="1636" cy="788" r="43" fill="url(#dg)" filter="url(#bl1)"/><circle cx="1712" cy="777" r="49" fill="url(#dg)" filter="url(#bl1)"/><circle cx="1815" cy="777" r="55" fill="url(#dg)" filter="url(#bl1)"/><circle cx="1900" cy="780" r="45" fill="url(#dg)" filter="url(#bl1)"/><circle cx="1990" cy="790" r="45" fill="url(#dg)" filter="url(#bl1)"/><circle cx="2060" cy="790" r="40" fill="url(#dg)" filter="url(#bl1)"/><circle cx="1690.5" cy="853" r="49" fill="url(#dg)" filter="url(#bl1)"/><circle cx="1777" cy="837" r="49" fill="url(#dg)" filter="url(#bl1)"/><circle cx="1858.7" cy="842" r="49" fill="url(#dg)" filter="url(#bl1)"/><circle cx="1950" cy="850" r="45" fill="url(#dg)" filter="url(#bl1)"/><circle cx="2030" cy="850" r="40" fill="url(#dg)" filter="url(#bl1)"/><circle cx="1744.8" cy="907.5" r="43" fill="url(#dg)" filter="url(#bl1)"/><circle cx="1820.7" cy="923.8" r="43" fill="url(#dg)" filter="url(#bl1)"/><circle cx="1900" cy="920" r="43" fill="url(#dg)" filter="url(#bl1)"/><circle cx="1980" cy="900" r="40" fill="url(#dg)" filter="url(#bl1)"/><circle cx="1580" cy="800" r="35" fill="url(#dg)" filter="url(#bl1)"/><circle cx="1800" cy="420" r="40" fill="url(#dg)" filter="url(#bl1)"/><circle cx="1740" cy="470" r="40" fill="url(#dg)" filter="url(#bl1)"/><path d="M1561.3 447.3A45.1 45.1 0 0 1 1642.7 440.2" fill="none" stroke="#fff" stroke-width="5" opacity="0.55" filter="url(#bl1)"/><path d="M1653.3 411.3A39.6 39.6 0 0 1 1724.8 405.0" fill="none" stroke="#fff" stroke-width="5" opacity="0.55" filter="url(#bl1)"/><path d="M1870.6 420.2A45.1 45.1 0 0 1 1952.0 413.1" fill="none" stroke="#fff" stroke-width="5" opacity="0.55" filter="url(#bl1)"/><path d="M1955.5 419.0A64.4 64.4 0 0 1 2071.8 408.8" fill="none" stroke="#fff" stroke-width="5" opacity="0.55" filter="url(#bl1)"/><path d="M2065.6 492.5A39.6 39.6 0 0 1 2137.1 486.2" fill="none" stroke="#fff" stroke-width="5" opacity="0.55" filter="url(#bl1)"/><path d="M1528.6 546.5A39.6 39.6 0 0 1 1600.1 540.2" fill="none" stroke="#fff" stroke-width="5" opacity="0.55" filter="url(#bl1)"/><path d="M1604.6 517.6A45.1 45.1 0 0 1 1686.0 510.5" fill="none" stroke="#fff" stroke-width="5" opacity="0.55" filter="url(#bl1)"/><path d="M1844.3 543.0A49.7 49.7 0 0 1 1934.0 535.2" fill="none" stroke="#fff" stroke-width="5" opacity="0.55" filter="url(#bl1)"/><path d="M1937.1 514.1A55.2 55.2 0 0 1 2036.8 505.4" fill="none" stroke="#fff" stroke-width="5" opacity="0.55" filter="url(#bl1)"/><path d="M2034.3 587.0A49.7 49.7 0 0 1 2124.0 579.2" fill="none" stroke="#fff" stroke-width="5" opacity="0.55" filter="url(#bl1)"/><path d="M1522.8 633.5A39.6 39.6 0 0 1 1594.3 627.2" fill="none" stroke="#fff" stroke-width="5" opacity="0.55" filter="url(#bl1)"/><path d="M1593.6 609.6A45.1 45.1 0 0 1 1675.0 602.5" fill="none" stroke="#fff" stroke-width="5" opacity="0.55" filter="url(#bl1)"/><path d="M1675.3 588.6A45.1 45.1 0 0 1 1756.7 581.5" fill="none" stroke="#fff" stroke-width="5" opacity="0.55" filter="url(#bl1)"/><path d="M1750.8 579.5A39.6 39.6 0 0 1 1822.3 573.2" fill="none" stroke="#fff" stroke-width="5" opacity="0.55" filter="url(#bl1)"/><path d="M1850.0 663.0A49.7 49.7 0 0 1 1939.7 655.2" fill="none" stroke="#fff" stroke-width="5" opacity="0.55" filter="url(#bl1)"/><path d="M1951.6 620.6A45.1 45.1 0 0 1 2033.0 613.5" fill="none" stroke="#fff" stroke-width="5" opacity="0.55" filter="url(#bl1)"/><path d="M1555.8 698.5A39.6 39.6 0 0 1 1627.3 692.2" fill="none" stroke="#fff" stroke-width="5" opacity="0.55" filter="url(#bl1)"/><path d="M1637.3 696.6A45.1 45.1 0 0 1 1718.7 689.5" fill="none" stroke="#fff" stroke-width="5" opacity="0.55" filter="url(#bl1)"/><path d="M1718.6 685.6A45.1 45.1 0 0 1 1800.0 678.5" fill="none" stroke="#fff" stroke-width="5" opacity="0.55" filter="url(#bl1)"/><path d="M1801.1 705.8A41.4 41.4 0 0 1 1875.9 699.3" fill="none" stroke="#fff" stroke-width="5" opacity="0.55" filter="url(#bl1)"/><path d="M1939.8 696.3A46.0 46.0 0 0 1 2022.8 689.0" fill="none" stroke="#fff" stroke-width="5" opacity="0.55" filter="url(#bl1)"/><path d="M2032.8 686.5A39.6 39.6 0 0 1 2104.3 680.2" fill="none" stroke="#fff" stroke-width="5" opacity="0.55" filter="url(#bl1)"/><path d="M1598.8 774.5A39.6 39.6 0 0 1 1670.3 768.2" fill="none" stroke="#fff" stroke-width="5" opacity="0.55" filter="url(#bl1)"/><path d="M1669.6 761.6A45.1 45.1 0 0 1 1751.0 754.5" fill="none" stroke="#fff" stroke-width="5" opacity="0.55" filter="url(#bl1)"/><path d="M1767.5 759.7A50.6 50.6 0 0 1 1858.8 751.7" fill="none" stroke="#fff" stroke-width="5" opacity="0.55" filter="url(#bl1)"/><path d="M1861.1 765.8A41.4 41.4 0 0 1 1935.9 759.3" fill="none" stroke="#fff" stroke-width="5" opacity="0.55" filter="url(#bl1)"/><path d="M1951.1 775.8A41.4 41.4 0 0 1 2025.9 769.3" fill="none" stroke="#fff" stroke-width="5" opacity="0.55" filter="url(#bl1)"/><path d="M2025.4 777.4A36.8 36.8 0 0 1 2091.9 771.6" fill="none" stroke="#fff" stroke-width="5" opacity="0.55" filter="url(#bl1)"/><path d="M1648.1 837.6A45.1 45.1 0 0 1 1729.5 830.5" fill="none" stroke="#fff" stroke-width="5" opacity="0.55" filter="url(#bl1)"/><path d="M1734.6 821.6A45.1 45.1 0 0 1 1816.0 814.5" fill="none" stroke="#fff" stroke-width="5" opacity="0.55" filter="url(#bl1)"/><path d="M1816.3 826.6A45.1 45.1 0 0 1 1897.7 819.5" fill="none" stroke="#fff" stroke-width="5" opacity="0.55" filter="url(#bl1)"/><path d="M1911.1 835.8A41.4 41.4 0 0 1 1985.9 829.3" fill="none" stroke="#fff" stroke-width="5" opacity="0.55" filter="url(#bl1)"/><path d="M1995.4 837.4A36.8 36.8 0 0 1 2061.9 831.6" fill="none" stroke="#fff" stroke-width="5" opacity="0.55" filter="url(#bl1)"/><path d="M1707.6 894.0A39.6 39.6 0 0 1 1779.1 887.7" fill="none" stroke="#fff" stroke-width="5" opacity="0.55" filter="url(#bl1)"/><path d="M1783.5 910.3A39.6 39.6 0 0 1 1855.0 904.0" fill="none" stroke="#fff" stroke-width="5" opacity="0.55" filter="url(#bl1)"/><path d="M1862.8 906.5A39.6 39.6 0 0 1 1934.3 900.2" fill="none" stroke="#fff" stroke-width="5" opacity="0.55" filter="url(#bl1)"/><path d="M1945.4 887.4A36.8 36.8 0 0 1 2011.9 881.6" fill="none" stroke="#fff" stroke-width="5" opacity="0.55" filter="url(#bl1)"/><path d="M1549.7 789.0A32.2 32.2 0 0 1 1607.9 783.9" fill="none" stroke="#fff" stroke-width="5" opacity="0.55" filter="url(#bl1)"/><path d="M1765.4 407.4A36.8 36.8 0 0 1 1831.9 401.6" fill="none" stroke="#fff" stroke-width="5" opacity="0.55" filter="url(#bl1)"/><path d="M1705.4 457.4A36.8 36.8 0 0 1 1771.9 451.6" fill="none" stroke="#fff" stroke-width="5" opacity="0.55" filter="url(#bl1)"/><ellipse cx="1897" cy="572" rx="40" ry="42" fill="#8e5f60" opacity="0.9" filter="url(#bl4)"/><ellipse cx="1970" cy="525" rx="32" ry="34" fill="#8e5f60" opacity="0.85" filter="url(#bl4)"/><ellipse cx="1902" cy="680" rx="40" ry="42" fill="#8a5c5d" opacity="0.95" filter="url(#bl4)"/><ellipse cx="1692" cy="665" rx="27" ry="28" fill="#9c6a6b" opacity="0.7" filter="url(#bl4)"/><ellipse cx="1747" cy="762" rx="32" ry="32" fill="#9c6a6b" opacity="0.7" filter="url(#bl4)"/><ellipse cx="1829" cy="795" rx="32" ry="32" fill="#986869" opacity="0.75" filter="url(#bl4)"/><ellipse cx="1600" cy="458" rx="18" ry="18" fill="#8e6364" opacity="0.8" filter="url(#bl4)"/><ellipse cx="2094" cy="626" rx="37" ry="42" fill="#9a8a8a" opacity="0.7" filter="url(#bl4)"/><ellipse cx="2002" cy="450" rx="30" ry="28" fill="#a87a7a" opacity="0.5" filter="url(#bl4)"/><ellipse cx="1774" cy="866" rx="30" ry="28" fill="#a07070" opacity="0.6" filter="url(#bl4)"/><ellipse cx="1614" cy="738" rx="25" ry="25" fill="#a87878" opacity="0.5" filter="url(#bl4)"/><ellipse cx="1980" cy="630" rx="28" ry="28" fill="#a57575" opacity="0.45" filter="url(#bl4)"/><ellipse cx="1990" cy="760" rx="30" ry="28" fill="#a88888" opacity="0.45" filter="url(#bl4)"/><ellipse cx="2040" cy="860" rx="30" ry="25" fill="#a69494" opacity="0.45" filter="url(#bl4)"/><circle cx="1822" cy="990" r="7" fill="#8e7a7a" opacity="0.6" filter="url(#bl05)"/><path d="M1572 380V1000" stroke="#6f4748" stroke-width="1.8" opacity="0.45"/><path d="M1607 380V1000" stroke="#6f4748" stroke-width="1.8" opacity="0.45"/><path d="M1643 380V1000" stroke="#6f4748" stroke-width="1.8" opacity="0.45"/><path d="M1681 380V1000" stroke="#6f4748" stroke-width="1.8" opacity="0.45"/><path d="M1721.5 380V1000" stroke="#6f4748" stroke-width="1.8" opacity="0.45"/><path d="M1764 380V1000" stroke="#6f4748" stroke-width="1.8" opacity="0.45"/><path d="M1807 380V1000" stroke="#6f4748" stroke-width="1.8" opacity="0.45"/><path d="M1850 380V1000" stroke="#6f4748" stroke-width="1.8" opacity="0.45"/><path d="M1894 380V1000" stroke="#6f4748" stroke-width="1.8" opacity="0.45"/><path d="M1936 380V1000" stroke="#6f4748" stroke-width="1.8" opacity="0.45"/><path d="M1978 380V1000" stroke="#6f4748" stroke-width="1.8" opacity="0.45"/><path d="M2019 380V1000" stroke="#6f4748" stroke-width="1.8" opacity="0.45"/><path d="M2057 380V1000" stroke="#6f4748" stroke-width="1.8" opacity="0.45"/><path d="M2094 380V1000" stroke="#6f4748" stroke-width="1.8" opacity="0.45"/><path d="M1520 400H2140" stroke="#6f4748" stroke-width="1.8" opacity="0.45"/><path d="M1520 429H2140" stroke="#6f4748" stroke-width="1.8" opacity="0.45"/><path d="M1520 464H2140" stroke="#6f4748" stroke-width="1.8" opacity="0.45"/><path d="M1520 505H2140" stroke="#6f4748" stroke-width="1.8" opacity="0.45"/><path d="M1520 546H2140" stroke="#6f4748" stroke-width="1.8" opacity="0.45"/><path d="M1520 587H2140" stroke="#6f4748" stroke-width="1.8" opacity="0.45"/><path d="M1520 628.5H2140" stroke="#6f4748" stroke-width="1.8" opacity="0.45"/><path d="M1520 672H2140" stroke="#6f4748" stroke-width="1.8" opacity="0.45"/><path d="M1520 718H2140" stroke="#6f4748" stroke-width="1.8" opacity="0.45"/><path d="M1520 760.7H2140" stroke="#6f4748" stroke-width="1.8" opacity="0.45"/><path d="M1520 804H2140" stroke="#6f4748" stroke-width="1.8" opacity="0.45"/><path d="M1520 845.5H2140" stroke="#6f4748" stroke-width="1.8" opacity="0.45"/><path d="M1520 884H2140" stroke="#6f4748" stroke-width="1.8" opacity="0.45"/><path d="M1520 920.5H2140" stroke="#6f4748" stroke-width="1.8" opacity="0.45"/><path d="M1520 953.8H2140" stroke="#6f4748" stroke-width="1.8" opacity="0.45"/><ellipse cx="1599" cy="648" rx="5" ry="9" fill="#ffffff" opacity="0.85" filter="url(#bl1)"/><ellipse cx="1624" cy="660" rx="5" ry="11" fill="#ffffff" opacity="0.85" filter="url(#bl1)"/><ellipse cx="1690" cy="610" rx="14" ry="16" fill="#ffffff" opacity="0.9" filter="url(#bl1)"/><ellipse cx="1750" cy="604" rx="11" ry="12" fill="#ffffff" opacity="0.9" filter="url(#bl1)"/><ellipse cx="1625" cy="575" rx="8" ry="12" fill="#ffffff" opacity="0.85" filter="url(#bl1)"/><ellipse cx="1802" cy="592" rx="4" ry="16" fill="#ffffff" opacity="0.7" filter="url(#bl1)"/><ellipse cx="1555" cy="600" rx="6" ry="13" fill="#ffffff" opacity="0.7" filter="url(#bl1)"/><ellipse cx="1669" cy="708" rx="8" ry="7" fill="#ffffff" opacity="0.8" filter="url(#bl1)"/><ellipse cx="1820" cy="772" rx="8" ry="5" fill="#ffffff" opacity="0.6" filter="url(#bl1)"/><ellipse cx="1650" cy="805" rx="6" ry="5" fill="#ffffff" opacity="0.6" filter="url(#bl1)"/><ellipse cx="1585" cy="740" rx="5" ry="6" fill="#ffffff" opacity="0.6" filter="url(#bl1)"/><ellipse cx="1700" cy="795" rx="6" ry="5" fill="#ffffff" opacity="0.6" filter="url(#bl1)"/></g></g></svg>
<svg style="left:12px;top:173.5px" width="168" height="94.2" viewBox="1071 249 1537 864"><defs><filter id="tbl" x="-10%" y="-10%" width="120%" height="120%"><feGaussianBlur stdDeviation="16"/></filter></defs><g filter="url(#tbl)"><use href="#berry"/></g></svg>
<div style="left:491.4px;top:1306px;width:2875.2px;height:1.8px;background:#0d0d0d;"></div>
<div style="left:532.7px;top:1323px;font-size:16px;line-height:16px;color:#4a9cf2;white-space:pre;transform:scaleX(0.9410);transform-origin:0 0;">80.1</div>
<div style="left:572.0px;top:1323px;font-size:16px;line-height:16px;color:#c8c8c8;white-space:pre;transform:scaleX(1.0262);transform-origin:0 0;">%</div>
<div style="left:608.8px;top:1315.6px;width:28.6px;height:27.1px;background:#0b0b0b;border:1px solid #2e2e2e;border-radius:5px;box-sizing:border-box;"></div>
<svg style="left:616px;top:1325px;" width="14" height="8" viewBox="0 0 14 8"><path d="M1 1l6.0 6l6.0 -6" fill="none" stroke="#d8d8d8" stroke-width="2.2"/></svg>
<div style="left:650px;top:1318px;width:2.5px;height:22px;background:#0d0d0d;"></div>
<div style="left:665.6px;top:1315.6px;width:133.7px;height:27.1px;background:#0b0b0b;border:1px solid #2e2e2e;border-radius:5px;box-sizing:border-box;"></div>
<div style="left:678.8px;top:1323px;font-size:16px;line-height:16px;color:#e0e0e0;white-space:pre;transform:scaleX(1.0704);transform-origin:0 0;">(Full)</div>
<svg style="left:772px;top:1325px;" width="14" height="8" viewBox="0 0 14 8"><path d="M1 1l6.0 6l6.0 -6" fill="none" stroke="#d8d8d8" stroke-width="2.2"/></svg>
<div style="left:812px;top:1316px;width:2.9px;height:24px;background:#0d0d0d;"></div>
<div style="left:827.2px;top:1313.6px;width:29.5px;height:29.4px;background:#4a4a4a;border-radius:6px;"></div>
<div style="left:899px;top:1313.6px;width:29.5px;height:29.4px;background:#4a4a4a;border-radius:6px;"></div>
<svg style="left:831px;top:1319px;" width="22" height="20" viewBox="0 0 22 20"><path d="M11 13H1V1h18v10" fill="none" stroke="#d0d0d0" stroke-width="1.4"/><path d="M11 2L7 8h3l-2 5 5-7h-3l2-4z" fill="#d0d0d0"/><path d="M14 13h7l-3.5 4z" fill="#d0d0d0"/></svg>
<svg style="left:867px;top:1320.5px;" width="22" height="17" viewBox="0 0 22 17"><rect x="0.7" y="0.7" width="20.6" height="15.6" fill="#555" stroke="#d0d0d0" stroke-width="1.3"/><rect x="1.5" y="1.5" width="4.4" height="4.4" fill="#111"/><rect x="1.5" y="10.3" width="4.4" height="4.4" fill="#111"/><rect x="5.9" y="5.9" width="4.4" height="4.4" fill="#111"/><rect x="10.3" y="1.5" width="4.4" height="4.4" fill="#111"/><rect x="10.3" y="10.3" width="4.4" height="4.4" fill="#111"/><rect x="14.700000000000001" y="5.9" width="4.4" height="4.4" fill="#111"/><rect x="19.1" y="1.5" width="4.4" height="4.4" fill="#111"/><rect x="19.1" y="10.3" width="4.4" height="4.4" fill="#111"/></svg>
<svg style="left:903px;top:1319px;" width="22" height="20" viewBox="0 0 22 20"><path d="M1 9L6 2h12v15H1z" fill="#555" stroke="#d0d0d0" stroke-width="1.4"/><circle cx="6" cy="2" r="1.3" fill="#d0d0d0"/><circle cx="18" cy="2" r="1.3" fill="#d0d0d0"/><circle cx="1" cy="9" r="1.3" fill="#d0d0d0"/><circle cx="1" cy="17" r="1.3" fill="#d0d0d0"/><circle cx="18" cy="17" r="1.3" fill="#d0d0d0"/></svg>
<svg style="left:939px;top:1319.5px;" width="21" height="18" viewBox="0 0 21 18"><rect x="0.7" y="0.7" width="19.6" height="16.6" fill="none" stroke="#d0d0d0" stroke-width="1.3"/><rect x="6" y="6" width="9.5" height="6.5" fill="#d0d0d0"/></svg>
<svg style="left:973px;top:1318px;" width="24" height="22" viewBox="0 0 24 22"><rect x="2" y="2" width="19" height="14" fill="none" stroke="#d0d0d0" stroke-width="1.3"/><path d="M11.5 0v18M0 9h23" stroke="#d0d0d0" stroke-width="1"/><path d="M16 17h6l-3 3.5z" fill="#d0d0d0"/></svg>
<div style="left:1013px;top:1316px;width:2.6px;height:24px;background:#0d0d0d;"></div>
<svg style="left:1032px;top:1318px;" width="25" height="22" viewBox="0 0 25 22"><circle cx="12" cy="5" r="4" fill="#e02828"/><circle cx="7" cy="11" r="4" fill="#2bb02b"/><circle cx="16" cy="11" r="4" fill="#3a6ef0"/><path d="M14 17h6l-3 3.5z" fill="#d0d0d0"/></svg>
<svg style="left:1068px;top:1318px;" width="24" height="22" viewBox="0 0 24 22"><circle cx="12" cy="11" r="9" fill="none" stroke="#d0d0d0" stroke-width="2"/><path d="M12 2l4 8M21 11l-8 3M16 19l-5-7M4 16l7-3M6 4l4 8" stroke="#d0d0d0" stroke-width="2"/></svg>
<div style="left:1103.0px;top:1323px;font-size:16px;line-height:16px;color:#4a9cf2;white-space:pre;transform:scaleX(1.0765);transform-origin:0 0;">+0.0</div>
<div style="left:1163.5px;top:1316px;width:2.6px;height:24px;background:#0d0d0d;"></div>
<svg style="left:1181px;top:1319px;" width="23" height="19" viewBox="0 0 23 19"><path d="M1 4h5l2-3h7l2 3h5v14H1z" fill="#d0d0d0"/><circle cx="11.5" cy="10.5" r="4.5" fill="#1e1e1e"/><circle cx="11.5" cy="10.5" r="2.8" fill="#d0d0d0"/></svg>
<svg style="left:1216px;top:1316px;" width="26" height="22" viewBox="0 0 26 22"><path d="M1 13c3-5 7-7 11-7s8 2 11 7c-3 5-7 7-11 7s-8-2-11-7z" fill="#777"/><circle cx="12" cy="13" r="3.5" fill="#1e1e1e"/><circle cx="19" cy="5" r="4.5" fill="#1e1e1e" stroke="#777" stroke-width="1.5"/></svg>
<div style="left:1255.5px;top:1316px;width:2.6px;height:24px;background:#0d0d0d;"></div>
<div style="left:1271.8px;top:1315.6px;width:103.2px;height:27.1px;background:#0b0b0b;border:1px solid #2e2e2e;border-radius:5px;box-sizing:border-box;"></div>
<div style="left:1283.5px;top:1323px;font-size:16px;line-height:16px;color:#e0e0e0;white-space:pre;transform:scaleX(1.0513);transform-origin:0 0;">0;00;00;00</div>
<div style="left:1388px;top:1316px;width:2.6px;height:24px;background:#0d0d0d;"></div>
<div style="left:3392.0px;top:137px;font-size:16px;line-height:16px;color:#d8d8d8;white-space:pre;transform:scaleX(1.0228);transform-origin:0 0;">Preview</div>
<svg style="left:3465.6px;top:140.5px;" width="12.2" height="11" viewBox="0 0 12.2 11"><path d="M0 1h12.2M0 5.5h12.2M0 10h12.2" stroke="#a0a0a0" stroke-width="1.8"/></svg>
<svg style="left:3443px;top:176.4px;" width="20" height="14" viewBox="0 0 20 14"><rect x="0" y="0" width="2.6" height="14" fill="#b0b0b0"/><path d="M19.5 0v14L5 7z" fill="#b0b0b0"/></svg>
<svg style="left:3478px;top:176.4px;" width="20" height="14" viewBox="0 0 20 14"><path d="M14 0v14L0 7z" fill="#b0b0b0"/><rect x="16.5" y="0" width="2.6" height="14" fill="#b0b0b0"/></svg>
<svg style="left:3517px;top:176.4px;" width="15" height="14" viewBox="0 0 15 14"><path d="M0 0v14L14.3 7z" fill="#b0b0b0"/></svg>
<svg style="left:3551px;top:176.4px;" width="20" height="14" viewBox="0 0 20 14"><rect x="0" y="0" width="2.6" height="14" fill="#b0b0b0"/><path d="M5.5 0v14L19.6 7z" fill="#b0b0b0"/></svg>
<svg style="left:3587.7px;top:176.4px;" width="19" height="14" viewBox="0 0 19 14"><path d="M0 0v14L14 7z" fill="#b0b0b0"/><rect x="16.2" y="0" width="2.6" height="14" fill="#b0b0b0"/></svg>
<div style="left:3382.5px;top:205px;width:292.5px;height:1.5px;background:#111;"></div>
<div style="left:3392.0px;top:226px;font-size:16px;line-height:16px;color:#d8d8d8;white-space:pre;transform:scaleX(1.0344);transform-origin:0 0;">Align</div>
<svg style="left:3797.6px;top:227px;" width="12.4" height="11.8" viewBox="0 0 12.4 11.8"><path d="M0 1h12.4M0 5.9h12.4M0 10.8h12.4" stroke="#a0a0a0" stroke-width="1.8"/></svg>
<div style="left:3383.2px;top:273px;font-size:16px;line-height:16px;color:#c8c8c8;white-space:pre;">Align Layers to:</div>
<div style="left:3505.6px;top:262.8px;width:158.9px;height:34.6px;background:#2c2c2c;border-radius:6px;"></div>
<div style="left:3519.0px;top:273px;font-size:16px;line-height:16px;color:#7c7c7c;white-space:pre;">Selection</div>
<svg style="left:3636px;top:276px;" width="15" height="8.5" viewBox="0 0 15 8.5"><path d="M1 1l6.5 6.5l6.5 -6.5" fill="none" stroke="#8a8a8a" stroke-width="2"/></svg>
<svg style="left:3389.6px;top:316px;" width="21" height="24" viewBox="0 0 21 24"><rect x="0" y="0" width="1.5" height="24" fill="#7e7e7e"/><rect x="3" y="3" width="10" height="7" fill="#7e7e7e"/><rect x="3" y="13" width="17" height="7" fill="#7e7e7e"/></svg>
<svg style="left:3441.4px;top:316px;" width="19" height="24" viewBox="0 0 19 24"><rect x="8.8" y="0" width="1.5" height="24" fill="#7e7e7e"/><rect x="4" y="3" width="11" height="7" fill="#7e7e7e"/><rect x="0" y="13" width="19" height="7" fill="#7e7e7e"/></svg>
<svg style="left:3492.4px;top:316px;" width="21" height="24" viewBox="0 0 21 24"><rect x="19.5" y="0" width="1.5" height="24" fill="#7e7e7e"/><rect x="7" y="3" width="10" height="7" fill="#7e7e7e"/><rect x="0" y="13" width="17" height="7" fill="#7e7e7e"/></svg>
<svg style="left:3542px;top:316px;" width="23" height="24" viewBox="0 0 23 24"><rect x="0" y="0" width="23" height="1.5" fill="#7e7e7e"/><rect x="3" y="3" width="7" height="18" fill="#7e7e7e"/><rect x="13" y="3" width="7" height="10" fill="#7e7e7e"/></svg>
<svg style="left:3593px;top:316px;" width="23" height="24" viewBox="0 0 23 24"><rect x="0" y="11" width="23" height="1.5" fill="#7e7e7e"/><rect x="3" y="3" width="7" height="18" fill="#7e7e7e"/><rect x="13" y="7" width="7" height="10" fill="#7e7e7e"/></svg>
<svg style="left:3643.7px;top:316px;" width="23" height="24" viewBox="0 0 23 24"><rect x="0" y="22.5" width="23" height="1.5" fill="#7e7e7e"/><rect x="3" y="3" width="7" height="18" fill="#7e7e7e"/><rect x="13" y="10" width="7" height="11" fill="#7e7e7e"/></svg>
<div style="left:3383px;top:358.5px;width:292px;height:1.4px;background:#0e0e0e;"></div>
<div style="left:3383.2px;top:378px;font-size:16px;line-height:16px;color:#c8c8c8;white-space:pre;">Distribute Layers:</div>
<div style="left:3374px;top:399px;width:451px;height:2px;background:#0a0a0a;"></div>
<div style="left:3392.0px;top:413px;font-size:16px;line-height:16px;color:#d8d8d8;white-space:pre;transform:scaleX(1.0459);transform-origin:0 0;">Audio</div>
<div style="left:3374px;top:436.5px;width:461px;height:3.5px;background:#000;"></div>
<div style="left:3392.0px;top:453px;font-size:16px;line-height:16px;color:#d8d8d8;white-space:pre;transform:scaleX(0.9704);transform-origin:0 0;">Effects &amp; Presets</div>
<svg style="left:3797.6px;top:454.4px;" width="12.4" height="11.8" viewBox="0 0 12.4 11.8"><path d="M0 1h12.4M0 5.9h12.4M0 10.8h12.4" stroke="#a0a0a0" stroke-width="1.8"/></svg>
<div style="left:3382px;top:480.5px;width:436px;height:28.5px;background:#0e0e0e;border:1px solid #2e2e2e;border-radius:6px;box-sizing:border-box;"></div>
<svg style="left:3392px;top:486px;" width="24" height="18" viewBox="0 0 24 18"><circle cx="7" cy="7" r="5.3" fill="none" stroke="#b0b0b0" stroke-width="1.6"/><path d="M11 11l4.5 5" stroke="#b0b0b0" stroke-width="1.8"/><path d="M15.5 9.5l3 3 3-3" fill="none" stroke="#b0b0b0" stroke-width="1.4"/></svg>
<div style="left:3374px;top:515px;width:451px;height:1.5px;background:#0a0a0a;"></div>
<svg style="left:3769px;top:527px;" width="19" height="19" viewBox="0 0 19 19"><path d="M0 0h19v19H7L0 12z" fill="#c8c8c8"/><path d="M0 12h7v7" fill="#777"/></svg>
<div style="left:3797.8px;top:516px;width:1.5px;height:35px;background:#0a0a0a;"></div>
<div style="left:3374px;top:555.5px;width:451px;height:1.5px;background:#111;"></div>
<div style="left:3392.0px;top:569px;font-size:16px;line-height:16px;color:#d8d8d8;white-space:pre;">Properties: No Selection</div>
<svg style="left:3797.6px;top:571.5px;" width="12.4" height="11.8" viewBox="0 0 12.4 11.8"><path d="M0 1h12.4M0 5.9h12.4M0 10.8h12.4" stroke="#a0a0a0" stroke-width="1.8"/></svg>
<div style="left:3824.5px;top:214px;width:1px;height:416px;background:#141414;"></div>
<div style="left:3374px;top:628.8px;width:451px;height:2px;background:#0a0a0a;"></div>
<div style="left:3392.0px;top:643px;font-size:16px;line-height:16px;color:#d8d8d8;white-space:pre;transform:scaleX(1.0106);transform-origin:0 0;">Tracker</div>
<svg style="left:3797.6px;top:645.3px;" width="12.4" height="11.5" viewBox="0 0 12.4 11.5"><path d="M0 1h12.4M0 5.75h12.4M0 10.5h12.4" stroke="#a0a0a0" stroke-width="1.8"/></svg>
<div style="left:3385.8px;top:678.8px;width:140.19999999999982px;height:29.600000000000023px;background:#2e2e2e;border-radius:14.800000000000011px;"></div>
<div style="left:3403.8px;top:687px;font-size:16px;line-height:16px;color:#7a7a7a;white-space:pre;font-weight:bold;transform:scaleX(0.9813);transform-origin:0 0;">Track Camera</div>
<div style="left:3533px;top:678.8px;width:139.80000000000018px;height:29.600000000000023px;background:#2e2e2e;border-radius:14.800000000000011px;"></div>
<div style="left:3545.7px;top:687px;font-size:16px;line-height:16px;color:#7a7a7a;white-space:pre;font-weight:bold;">Warp Stabilizer</div>
<div style="left:3385.8px;top:716.6px;width:140.19999999999982px;height:29.399999999999977px;background:#2e2e2e;border-radius:14.699999999999989px;"></div>
<div style="left:3406.0px;top:724px;font-size:16px;line-height:16px;color:#7a7a7a;white-space:pre;font-weight:bold;">Track Motion</div>
<div style="left:3533px;top:716.6px;width:139.80000000000018px;height:29.399999999999977px;background:#2e2e2e;border-radius:14.699999999999989px;"></div>
<div style="left:3541.4px;top:724px;font-size:16px;line-height:16px;color:#7a7a7a;white-space:pre;font-weight:bold;">Stabilize Motion</div>
<div style="left:3390.7px;top:760px;font-size:16px;line-height:16px;color:#d0d0d0;white-space:pre;transform:scaleX(1.0223);transform-origin:0 0;">Motion Source:</div>
<div style="left:3503.7px;top:752.7px;width:167.3px;height:27.9px;background:#000;border:1px solid #3a3a3a;border-radius:5px;box-sizing:border-box;"></div>
<div style="left:3516.0px;top:760px;font-size:16px;line-height:16px;color:#e0e0e0;white-space:pre;transform:scaleX(1.0458);transform-origin:0 0;">None</div>
<svg style="left:3643.6px;top:762.5px;" width="14.7" height="8.5" viewBox="0 0 14.7 8.5"><path d="M1 1l6.35 6.5l6.35 -6.5" fill="none" stroke="#e0e0e0" stroke-width="2.2"/></svg>
<div style="left:3398.9px;top:795px;font-size:16px;line-height:16px;color:#8a8a8a;white-space:pre;">Current Track:</div>
<div style="left:3502.3px;top:786.5px;width:169.2px;height:30.2px;background:#2b2b2b;border-radius:6px;"></div>
<div style="left:3516.0px;top:795px;font-size:16px;line-height:16px;color:#7a7a7a;white-space:pre;transform:scaleX(1.0458);transform-origin:0 0;">None</div>
<svg style="left:3643.6px;top:797px;" width="14.7" height="8.5" viewBox="0 0 14.7 8.5"><path d="M1 1l6.35 6.5l6.35 -6.5" fill="none" stroke="#7a7a7a" stroke-width="2"/></svg>
<div style="left:3418.3px;top:829px;font-size:16px;line-height:16px;color:#8a8a8a;white-space:pre;">Track Type:</div>
<div style="left:3502.3px;top:821px;width:169.2px;height:30.2px;background:#2b2b2b;border-radius:6px;"></div>
<div style="left:3516.0px;top:829px;font-size:16px;line-height:16px;color:#7a7a7a;white-space:pre;">Stabilize</div>
<svg style="left:3643.6px;top:831.5px;" width="14.7" height="8.5" viewBox="0 0 14.7 8.5"><path d="M1 1l6.35 6.5l6.35 -6.5" fill="none" stroke="#7a7a7a" stroke-width="2"/></svg>
<div style="left:3385px;top:860px;width:19px;height:18.5px;background:#5a5a5a;border-radius:3px;"></div>
<svg style="left:3387px;top:862px;" width="15" height="14" viewBox="0 0 15 14"><path d="M2.5 7l3.5 4 7-9" fill="none" stroke="#1e1e1e" stroke-width="2.2"/></svg>
<div style="left:3417.6px;top:863px;font-size:16px;line-height:16px;color:#8a8a8a;white-space:pre;">Position</div>
<div style="left:3488.9px;top:860px;width:18.1px;height:18.5px;border:2px solid #6a6a6a;border-radius:3px;box-sizing:border-box;"></div>
<div style="left:3521.0px;top:863px;font-size:16px;line-height:16px;color:#8a8a8a;white-space:pre;transform:scaleX(1.0203);transform-origin:0 0;">Rotation</div>
<div style="left:3594px;top:860px;width:18px;height:18.5px;border:2px solid #6a6a6a;border-radius:3px;box-sizing:border-box;"></div>
<div style="left:3625.5px;top:863px;font-size:16px;line-height:16px;color:#8a8a8a;white-space:pre;transform:scaleX(0.9370);transform-origin:0 0;">Scale</div>
<div style="left:3394.0px;top:894px;font-size:16px;line-height:16px;color:#8a8a8a;white-space:pre;transform:scaleX(1.0555);transform-origin:0 0;">Motion Target:</div>
<div style="left:3391px;top:918.6px;width:132px;height:29.399999999999977px;background:#2e2e2e;border-radius:14.699999999999989px;"></div>
<div style="left:3410.4px;top:928px;font-size:16px;line-height:16px;color:#7a7a7a;white-space:pre;font-weight:bold;transform:scaleX(0.9780);transform-origin:0 0;">Edit Target...</div>
<div style="left:3537px;top:918.6px;width:130px;height:29.399999999999977px;background:#2e2e2e;border-radius:14.699999999999989px;"></div>
<div style="left:3566.4px;top:928px;font-size:16px;line-height:16px;color:#7a7a7a;white-space:pre;font-weight:bold;transform:scaleX(0.9530);transform-origin:0 0;">Options...</div>
<div style="left:3426.5px;top:963px;font-size:16px;line-height:16px;color:#8a8a8a;white-space:pre;transform:scaleX(0.9892);transform-origin:0 0;">Analyze:</div>
<svg style="left:3506px;top:964px;" width="19" height="13" viewBox="0 0 19 13"><path d="M13 0v13L0 6.5z" fill="#8a8a8a"/><rect x="16" y="0" width="3" height="13" fill="#8a8a8a"/></svg>
<svg style="left:3549px;top:964px;" width="14" height="13" viewBox="0 0 14 13"><path d="M13.8 0v13L0 6.5z" fill="#8a8a8a"/></svg>
<svg style="left:3587.7px;top:964px;" width="14" height="13" viewBox="0 0 14 13"><path d="M0 0v13L13.8 6.5z" fill="#8a8a8a"/></svg>
<svg style="left:3625px;top:964px;" width="19" height="13" viewBox="0 0 19 13"><rect x="0" y="0" width="3" height="13" fill="#8a8a8a"/><path d="M5.5 0v13L18.6 6.5z" fill="#8a8a8a"/></svg>
<div style="left:3389.7px;top:993.4px;width:132.0px;height:30.200000000000045px;background:#2e2e2e;border-radius:15.100000000000023px;"></div>
<div style="left:3435.0px;top:1002px;font-size:16px;line-height:16px;color:#7a7a7a;white-space:pre;font-weight:bold;transform:scaleX(0.9340);transform-origin:0 0;">Reset</div>
<div style="left:3538.5px;top:993.4px;width:132.0px;height:30.200000000000045px;background:#2e2e2e;border-radius:15.100000000000023px;"></div>
<div style="left:3581.8px;top:1002px;font-size:16px;line-height:16px;color:#7a7a7a;white-space:pre;font-weight:bold;transform:scaleX(0.9833);transform-origin:0 0;">Apply</div>
<svg style="left:18.7px;top:1367.2px;" width="8.5" height="8.5" viewBox="0 0 8.5 8.5"><path d="M0.7 0.7L7.8 7.8M7.8 0.7L0.7 7.8" stroke="#b0b0b0" stroke-width="1.5"/></svg>
<div style="left:40.9px;top:1360.9px;width:15.1px;height:15.1px;background:#ad9a7b;"></div>
<div style="left:73.7px;top:1363px;font-size:16px;line-height:16px;color:#e6e6e6;white-space:pre;">1.4masking</div>
<svg style="left:169.9px;top:1365px;" width="12.3" height="11.4" viewBox="0 0 12.3 11.4"><path d="M0 1h12.3M0 5.7h12.3M0 10.4h12.3" stroke="#a0a0a0" stroke-width="1.8"/></svg>
<div style="left:18px;top:1384.8px;width:164.2px;height:2.5px;background:#e0e0e0;border-radius:1px;"></div>
<div style="left:239.1px;top:1363px;font-size:16px;line-height:16px;color:#bdbdbd;white-space:pre;">Render Queue</div>
<div style="left:21.2px;top:1397px;font-size:21.5px;line-height:21.5px;color:#4a9df5;white-space:pre;font-weight:bold;transform:scaleX(1.0250);transform-origin:0 0;">0;00;00;00</div>
<div style="left:18.7px;top:1420px;font-size:15px;line-height:15px;color:#2f80d9;white-space:pre;transform:scaleX(0.9747);transform-origin:0 0;">00000 (29.97 fps)</div>
<div style="left:150px;top:1399.5px;width:449px;height:28.3px;background:#0e0e0e;border:1px solid #2e2e2e;border-radius:6px;box-sizing:border-box;"></div>
<svg style="left:159.8px;top:1405px;" width="24" height="18" viewBox="0 0 24 18"><circle cx="7" cy="7" r="5.3" fill="none" stroke="#b0b0b0" stroke-width="1.6"/><path d="M11 11l4.5 5" stroke="#b0b0b0" stroke-width="1.8"/><path d="M15.5 9.5l3 3 3-3" fill="none" stroke="#b0b0b0" stroke-width="1.4"/></svg>
<svg style="left:617.5px;top:1404px;" width="26" height="22" viewBox="0 0 26 22"><rect x="0" y="2" width="6" height="3" fill="#a8a8a8"/><path d="M6 3.5h6M9 3.5v12M9 9.5h6M9 15.5h6" stroke="#a8a8a8" stroke-width="1.6" fill="none"/><rect x="15" y="7.5" width="8" height="4" fill="#a8a8a8"/><rect x="15" y="13.5" width="8" height="4" fill="#a8a8a8"/><path d="M18 19h6l-3 3z" fill="#a8a8a8"/></svg>
<svg style="left:654px;top:1404px;" width="25" height="22" viewBox="0 0 25 22"><path d="M3 9c0-5 4-8 9.5-8S22 4 22 9z" fill="#a8a8a8"/><rect x="10.5" y="9" width="4" height="7" fill="#a8a8a8"/><path d="M0 11h25" stroke="#a8a8a8" stroke-width="1.5"/><rect x="0" y="16" width="25" height="6" fill="#555"/><circle cx="9" cy="6" r="1.6" fill="#1e1e1e"/><circle cx="16" cy="6" r="1.6" fill="#1e1e1e"/></svg>
<svg style="left:690.8px;top:1404px;" width="23" height="22" viewBox="0 0 23 22"><rect x="5" y="0" width="17" height="16" fill="#a8a8a8"/><rect x="8" y="3" width="11" height="10" fill="#3a3a3a"/><path d="M10 8h7" stroke="#a8a8a8" stroke-width="1.5"/><path d="M2 4v17h17" fill="none" stroke="#a8a8a8" stroke-width="1.6"/></svg>
<svg style="left:727px;top:1404px;" width="22" height="22" viewBox="0 0 22 22"><circle cx="7.5" cy="14" r="6.8" fill="none" stroke="#a8a8a8" stroke-width="1.5"/><circle cx="10.5" cy="11" r="6.8" fill="#1e1e1e" stroke="#a8a8a8" stroke-width="1.5"/><circle cx="13.5" cy="8" r="6.8" fill="#3c3c3c" stroke="#a8a8a8" stroke-width="1.5"/></svg>
<svg style="left:761.7px;top:1402px;" width="25" height="24" viewBox="0 0 25 24"><rect x="2" y="4.5" width="21" height="19" fill="none" stroke="#a8a8a8" stroke-width="1.5"/><path d="M5 4.5V2M9.5 4.5V1M14 4.5V2M18.5 4.5V1M2 8H0.5M2 12H0M2 16H0.5" stroke="#a8a8a8" stroke-width="1.4"/><path d="M5 8c6 0 6 11 14 11" fill="none" stroke="#a8a8a8" stroke-width="1.5"/></svg>
<div style="left:2px;top:1440px;width:804px;height:1.5px;background:#101010;"></div>
<div style="left:2px;top:1468.3px;width:804px;height:1.5px;background:#101010;"></div>
<svg style="left:12.7px;top:1451px;" width="16" height="11" viewBox="0 0 16 11"><path d="M0.5 5.5C3 1.5 5.5 0.5 8 0.5s5 1 7.5 5c-2.5 4-5 5-7.5 5s-5-1-7.5-5z" fill="#a8a8a8"/><circle cx="8" cy="5.5" r="2.6" fill="#1e1e1e"/></svg>
<svg style="left:33.4px;top:1449px;" width="18" height="16" viewBox="0 0 18 16"><path d="M0 5h4l5-5v16l-5-5H0z" fill="#a8a8a8"/><path d="M12 4c2 2 2 6 0 8M15 2c3 3 3 9 0 12" fill="none" stroke="#a8a8a8" stroke-width="1.5"/></svg>
<div style="left:60.5px;top:1452.5px;width:9px;height:9px;background:#a8a8a8;border-radius:50%;"></div>
<svg style="left:79.6px;top:1448px;" width="15" height="16" viewBox="0 0 15 16"><path d="M3.5 7V5a4 4 0 0 1 8 0v2" fill="none" stroke="#a8a8a8" stroke-width="1.8"/><rect x="1" y="7" width="13" height="9" fill="#a8a8a8"/></svg>
<div style="left:103px;top:1449px;width:2.2px;height:17px;background:#0c0c0c;"></div>
<div style="left:151.2px;top:1449px;width:2.2px;height:17px;background:#0c0c0c;"></div>
<div style="left:200px;top:1449px;width:2.2px;height:17px;background:#0c0c0c;"></div>
<div style="left:394.7px;top:1449px;width:2.2px;height:17px;background:#0c0c0c;"></div>
<div style="left:604.8px;top:1449px;width:2.2px;height:17px;background:#0c0c0c;"></div>
<div style="left:780.5px;top:1449px;width:2.2px;height:17px;background:#0c0c0c;"></div>
<svg style="left:124.8px;top:1448px;" width="19" height="19" viewBox="0 0 19 19"><path d="M1 1h8l9 9-8 8-9-9z" fill="#a8a8a8"/><circle cx="5.5" cy="5.5" r="1.7" fill="#1e1e1e"/></svg>
<div style="left:160.8px;top:1451px;font-size:13px;line-height:13px;color:#c0c0c0;white-space:pre;">#</div>
<div style="left:209.5px;top:1449px;font-size:16px;line-height:16px;color:#c8c8c8;white-space:pre;transform:scaleX(0.8434);transform-origin:0 0;">Source Name</div>
<svg style="left:405px;top:1449px;" width="19" height="15" viewBox="0 0 19 15"><path d="M2 8c0-5 3.5-7.5 7.5-7.5S17 3 17 8z" fill="#a8a8a8"/><rect x="8" y="8" width="3" height="5" fill="#a8a8a8"/><path d="M0 10.5h19M3 14h13" stroke="#a8a8a8" stroke-width="1.3"/><circle cx="6.5" cy="5" r="1.3" fill="#1e1e1e"/><circle cx="12.5" cy="5" r="1.3" fill="#1e1e1e"/></svg>
<svg style="left:430px;top:1449px;" width="15" height="15" viewBox="0 0 15 15"><circle cx="7.5" cy="7.5" r="3" fill="none" stroke="#a8a8a8" stroke-width="1.5"/><path d="M7.5 0v3M7.5 12v3M0 7.5h3M12 7.5h3M2.2 2.2l2.1 2.1M10.7 10.7l2.1 2.1M2.2 12.8l2.1-2.1M10.7 4.3l2.1-2.1" stroke="#a8a8a8" stroke-width="1.4"/></svg>
<svg style="left:450px;top:1449px;" width="17" height="15" viewBox="0 0 17 15"><path d="M1 1l15 13" stroke="#a8a8a8" stroke-width="2" stroke-dasharray="3 1.5"/></svg>
<div style="left:473.0px;top:1448px;font-size:17px;line-height:17px;color:#a8a8a8;white-space:pre;font-style:italic;">fx</div>
<svg style="left:494px;top:1449px;" width="19" height="15" viewBox="0 0 19 15"><rect x="0.5" y="0.5" width="18" height="14" fill="#a8a8a8"/><rect x="3.5" y="3" width="12" height="9" fill="#1e1e1e"/><path d="M6 7.5h7" stroke="#a8a8a8" stroke-width="1.5"/></svg>
<svg style="left:517px;top:1448px;" width="19" height="18" viewBox="0 0 19 18"><circle cx="11.5" cy="6.5" r="6" fill="#a8a8a8"/><circle cx="8.5" cy="9.5" r="6" fill="none" stroke="#a8a8a8" stroke-width="1.4"/><circle cx="6" cy="12" r="5.5" fill="none" stroke="#a8a8a8" stroke-width="1.4"/></svg>
<svg style="left:540px;top:1448px;" width="17" height="17" viewBox="0 0 17 17"><circle cx="8.5" cy="8.5" r="7.5" fill="none" stroke="#a8a8a8" stroke-width="1.6"/><path d="M14 3A7.5 7.5 0 0 1 3 14z" fill="#a8a8a8"/></svg>
<svg style="left:564px;top:1448px;" width="16" height="17" viewBox="0 0 16 17"><path d="M8 1l7 4v7l-7 4-7-4V5zM1 5l7 4 7-4M8 9v7" fill="none" stroke="#a8a8a8" stroke-width="1.5"/></svg>
<div style="left:615.0px;top:1449px;font-size:16px;line-height:16px;color:#c8c8c8;white-space:pre;transform:scaleX(0.8537);transform-origin:0 0;">Parent &amp; Link</div>
<div style="left:2px;top:1468.3px;width:3366px;height:617px;background:#1e1e1e;"></div>
<div style="left:2px;top:1469.0px;width:3340px;height:1.3px;background:#141414;"></div>
<div style="left:3px;top:1470.3px;width:803px;height:24.2px;background:#2e2e2e;"></div>
<div style="left:807.5px;top:1470.3px;width:2534.5px;height:24.2px;background:#303030;"></div>
<div style="left:2px;top:1494.5px;width:3340px;height:1.3px;background:#141414;"></div>
<div style="left:3px;top:1495.8px;width:803px;height:24.2px;background:#2e2e2e;"></div>
<div style="left:807.5px;top:1495.8px;width:2534.5px;height:24.2px;background:#303030;"></div>
<div style="left:2px;top:1520.0px;width:3340px;height:1.3px;background:#141414;"></div>
<div style="left:3px;top:1521.3px;width:803px;height:24.2px;background:#1e1e1e;"></div>
<div style="left:807.5px;top:1521.3px;width:853.5999999999999px;height:24.2px;background:#242424;"></div>
<div style="left:1661.1px;top:1521.3px;width:1680.9px;height:24.2px;background:#1c1c1c;"></div>
<div style="left:2px;top:1545.5px;width:3340px;height:1.3px;background:#141414;"></div>
<div style="left:3px;top:1546.8px;width:803px;height:24.2px;background:#1e1e1e;"></div>
<div style="left:807.5px;top:1546.8px;width:853.5999999999999px;height:24.2px;background:#242424;"></div>
<div style="left:1661.1px;top:1546.8px;width:1680.9px;height:24.2px;background:#1c1c1c;"></div>
<div style="left:2px;top:1571.0px;width:3340px;height:1.3px;background:#141414;"></div>
<div style="left:3px;top:1572.3px;width:803px;height:24.2px;background:#1e1e1e;"></div>
<div style="left:807.5px;top:1572.3px;width:853.5999999999999px;height:24.2px;background:#242424;"></div>
<div style="left:1661.1px;top:1572.3px;width:1680.9px;height:24.2px;background:#1c1c1c;"></div>
<div style="left:2px;top:1596.5px;width:3340px;height:1.3px;background:#141414;"></div>
<div style="left:3px;top:1597.8px;width:803px;height:24.2px;background:#1e1e1e;"></div>
<div style="left:807.5px;top:1597.8px;width:853.5999999999999px;height:24.2px;background:#242424;"></div>
<div style="left:1661.1px;top:1597.8px;width:1680.9px;height:24.2px;background:#1c1c1c;"></div>
<div style="left:2px;top:1622.0px;width:3340px;height:1.3px;background:#141414;"></div>
<div style="left:3px;top:1623.3px;width:803px;height:24.2px;background:#1e1e1e;"></div>
<div style="left:807.5px;top:1623.3px;width:853.5999999999999px;height:24.2px;background:#242424;"></div>
<div style="left:1661.1px;top:1623.3px;width:1680.9px;height:24.2px;background:#1c1c1c;"></div>
<div style="left:2px;top:1647.5px;width:3340px;height:1.3px;background:#141414;"></div>
<div style="left:3px;top:1648.8px;width:803px;height:24.2px;background:#1e1e1e;"></div>
<div style="left:807.5px;top:1648.8px;width:853.5999999999999px;height:24.2px;background:#242424;"></div>
<div style="left:1661.1px;top:1648.8px;width:1680.9px;height:24.2px;background:#1c1c1c;"></div>
<div style="left:2px;top:1673.0px;width:3340px;height:1.3px;background:#141414;"></div>
<div style="left:3px;top:1674.3px;width:803px;height:24.2px;background:#2e2e2e;"></div>
<div style="left:807.5px;top:1674.3px;width:2534.5px;height:24.2px;background:#303030;"></div>
<div style="left:2px;top:1698.5px;width:3340px;height:1.3px;background:#141414;"></div>
<div style="left:3px;top:1699.8px;width:803px;height:24.2px;background:#2e2e2e;"></div>
<div style="left:807.5px;top:1699.8px;width:2534.5px;height:24.2px;background:#303030;"></div>
<div style="left:2px;top:1724.0px;width:3340px;height:1.3px;background:#141414;"></div>
<div style="left:3px;top:1725.3px;width:803px;height:24.2px;background:#2e2e2e;"></div>
<div style="left:807.5px;top:1725.3px;width:2534.5px;height:24.2px;background:#303030;"></div>
<div style="left:2px;top:1749.5px;width:3340px;height:1.3px;background:#141414;"></div>
<div style="left:3px;top:1750.8px;width:803px;height:24.2px;background:#2e2e2e;"></div>
<div style="left:807.5px;top:1750.8px;width:2534.5px;height:24.2px;background:#303030;"></div>
<div style="left:2px;top:1775.0px;width:3340px;height:1.3px;background:#141414;"></div>
<div style="left:807.5px;top:1776.3px;width:853.5999999999999px;height:281.70000000000005px;background:#252525;"></div>
<div style="left:805.2px;top:1469px;width:1.6px;height:591px;background:#0e0e0e;"></div>
<div style="left:9.2px;top:1472.3px;width:19px;height:18.4px;background:#111;border-radius:3px;"></div>
<svg style="left:11px;top:1476.7px;" width="17" height="11" viewBox="0 0 17 11"><path d="M0.5 5.5C3 1.8 5.8 0.5 8.5 0.5s5.5 1.3 8 5c-2.5 3.7-5.3 5-8 5s-5.5-1.3-8-5z" fill="#c4c4c4"/><circle cx="8.5" cy="5.5" r="3" fill="#111"/><circle cx="9.2" cy="4.2" r="0.6" fill="#c4c4c4"/></svg>
<div style="left:54.4px;top:1472.3px;width:18.4px;height:18.4px;background:#0e0e0e;border-radius:3px;"></div>
<div style="left:77.2px;top:1472.3px;width:18.4px;height:18.4px;background:#0e0e0e;border-radius:3px;"></div>
<svg style="left:112px;top:1476.7px;" width="9" height="14" viewBox="0 0 9 14"><path d="M1.2 1.2l6.3 5.8-6.3 5.8" fill="none" stroke="#bdbdbd" stroke-width="2.4"/></svg>
<div style="left:130.1px;top:1473.5px;width:18.4px;height:17.9px;background:#b83a3a;"></div>
<div style="left:162.6px;top:1476px;font-size:16px;line-height:16px;color:#c8c8c8;white-space:pre;">1</div>
<div style="left:208.2px;top:1473px;font-size:19.5px;line-height:19.5px;color:#c0c0c0;white-space:pre;font-weight:bold;font-family:'Liberation Serif',serif;">T</div>
<div style="left:234.0px;top:1476px;font-size:16px;line-height:16px;color:#c8c8c8;white-space:pre;transform:scaleX(1.0364);transform-origin:0 0;">&lt;empty text layer&gt;</div>
<div style="left:403.6px;top:1472.8px;width:19.8px;height:18.5px;background:#141414;border-radius:3px;"></div>
<svg style="left:405px;top:1474.8px;" width="17" height="14" viewBox="0 0 17 14"><path d="M2 7.5c0-4.5 3-7 6.5-7S15 3 15 7.5z" fill="#c8c8c8"/><rect x="7" y="7.5" width="3" height="4" fill="#c8c8c8"/><path d="M0 9.2h17M3 13h11" stroke="#c8c8c8" stroke-width="1.3"/><circle cx="6" cy="4.5" r="1.2" fill="#141414"/><circle cx="11" cy="4.5" r="1.2" fill="#141414"/></svg>
<div style="left:426.5px;top:1472.8px;width:18.5px;height:18.5px;background:#141414;border-radius:3px;"></div>
<svg style="left:428.5px;top:1474.8px;" width="14" height="14" viewBox="0 0 14 14"><circle cx="7" cy="7" r="2.8" fill="none" stroke="#6e6e6e" stroke-width="1.3"/><path d="M7 0v2.5M7 11.5V14M0 7h2.5M11.5 7H14M2 2l1.8 1.8M10.2 10.2L12 12M2 12l1.8-1.8M10.2 3.8L12 2" stroke="#6e6e6e" stroke-width="1.3"/></svg>
<div style="left:449px;top:1472.8px;width:19px;height:18.5px;background:#141414;border-radius:3px;"></div>
<svg style="left:451px;top:1474.8px;" width="15" height="15" viewBox="0 0 15 15"><path d="M1 14L14 1" stroke="#c8c8c8" stroke-width="1.8"/></svg>
<div style="left:515.7px;top:1472.8px;width:19px;height:18.5px;background:#141414;border-radius:3px;"></div>
<div style="left:538.6px;top:1472.8px;width:19px;height:18.5px;background:#141414;border-radius:3px;"></div>
<div style="left:561px;top:1472.8px;width:19px;height:18.5px;background:#141414;border-radius:3px;"></div>
<svg style="left:614.2px;top:1474.8px;" width="19" height="17" viewBox="0 0 19 17"><path d="M8.15 9.13 L8.25 9.27 L8.38 9.41 L8.54 9.53 L8.71 9.63 L8.91 9.72 L9.13 9.77 L9.36 9.80 L9.60 9.80 L9.85 9.77 L10.10 9.70 L10.35 9.59 L10.59 9.45 L10.82 9.27 L11.03 9.06 L11.22 8.82 L11.38 8.55 L11.51 8.25 L11.61 7.93 L11.66 7.59 L11.67 7.23 L11.64 6.87 L11.56 6.50 L11.43 6.14 L11.26 5.79 L11.04 5.45 L10.77 5.13 L10.46 4.85 L10.11 4.60 L9.72 4.39 L9.30 4.22 L8.85 4.10 L8.38 4.04 L7.90 4.04 L7.42 4.09 L6.93 4.21 L6.45 4.38 L5.99 4.62 L5.55 4.91 L5.14 5.27 L4.77 5.68 L4.45 6.13 L4.18 6.63 L3.97 7.17 L3.82 7.74 L3.74 8.33 L3.73 8.94 L3.80 9.55 L3.94 10.16 L4.16 10.76 L4.45 11.34 L4.81 11.89 L5.24 12.39 L5.74 12.85 L6.29 13.26 L6.90 13.59 L7.55 13.86 L8.24 14.05 L8.96 14.16 L9.70 14.18 L10.44 14.11 L11.17 13.95 L11.90 13.71 L12.60 13.37 L13.26 12.95 L13.87 12.45 L14.43 11.87 L14.92 11.22 L15.33 10.51 L15.66 9.74 L15.90 8.93 L16.05 8.09 L16.09 7.23 L16.03 6.36 L15.87 5.50 L15.60 4.65 L15.23 3.83 L14.76 3.05 L14.19 2.32 L13.54 1.66 L12.80 1.07" fill="none" stroke="#a8a8a8" stroke-width="1.5" stroke-linecap="round"/></svg>
<div style="left:642.5px;top:1472.3px;width:132.5px;height:20.3px;background:#000;border-radius:5px;"></div>
<div style="left:654.1px;top:1476px;font-size:16px;line-height:16px;color:#e8e8e8;white-space:pre;transform:scaleX(1.0458);transform-origin:0 0;">None</div>
<svg style="left:748px;top:1478.3px;" width="15" height="8.5" viewBox="0 0 15 8.5"><path d="M1 1l6.5 6.5l6.5 -6.5" fill="none" stroke="#e8e8e8" stroke-width="2.3"/></svg>
<div style="left:9.2px;top:1497.8px;width:19px;height:18.4px;background:#111;border-radius:3px;"></div>
<svg style="left:11px;top:1502.2px;" width="17" height="11" viewBox="0 0 17 11"><path d="M0.5 5.5C3 1.8 5.8 0.5 8.5 0.5s5.5 1.3 8 5c-2.5 3.7-5.3 5-8 5s-5.5-1.3-8-5z" fill="#c4c4c4"/><circle cx="8.5" cy="5.5" r="3" fill="#111"/><circle cx="9.2" cy="4.2" r="0.6" fill="#c4c4c4"/></svg>
<div style="left:54.4px;top:1497.8px;width:18.4px;height:18.4px;background:#0e0e0e;border-radius:3px;"></div>
<div style="left:77.2px;top:1497.8px;width:18.4px;height:18.4px;background:#0e0e0e;border-radius:3px;"></div>
<svg style="left:112px;top:1506.3px;" width="15" height="9" viewBox="0 0 15 9"><path d="M1.2 1.2l6.3 6.3 6.3-6.3" fill="none" stroke="#bdbdbd" stroke-width="2.4"/></svg>
<div style="left:130.1px;top:1499.0px;width:18.4px;height:17.9px;background:#b83a3a;"></div>
<div style="left:162.6px;top:1501px;font-size:16px;line-height:16px;color:#c8c8c8;white-space:pre;">2</div>
<div style="left:208.2px;top:1499px;font-size:19.5px;line-height:19.5px;color:#c0c0c0;white-space:pre;font-weight:bold;font-family:'Liberation Serif',serif;">T</div>
<div style="left:234.0px;top:1501px;font-size:16px;line-height:16px;color:#c8c8c8;white-space:pre;transform:scaleX(0.9874);transform-origin:0 0;">1.4 Mas... Zoe Vaillant</div>
<div style="left:403.6px;top:1498.3px;width:19.8px;height:18.5px;background:#141414;border-radius:3px;"></div>
<svg style="left:405px;top:1500.3px;" width="17" height="14" viewBox="0 0 17 14"><path d="M2 7.5c0-4.5 3-7 6.5-7S15 3 15 7.5z" fill="#c8c8c8"/><rect x="7" y="7.5" width="3" height="4" fill="#c8c8c8"/><path d="M0 9.2h17M3 13h11" stroke="#c8c8c8" stroke-width="1.3"/><circle cx="6" cy="4.5" r="1.2" fill="#141414"/><circle cx="11" cy="4.5" r="1.2" fill="#141414"/></svg>
<div style="left:426.5px;top:1498.3px;width:18.5px;height:18.5px;background:#141414;border-radius:3px;"></div>
<svg style="left:428.5px;top:1500.3px;" width="14" height="14" viewBox="0 0 14 14"><circle cx="7" cy="7" r="2.8" fill="none" stroke="#6e6e6e" stroke-width="1.3"/><path d="M7 0v2.5M7 11.5V14M0 7h2.5M11.5 7H14M2 2l1.8 1.8M10.2 10.2L12 12M2 12l1.8-1.8M10.2 3.8L12 2" stroke="#6e6e6e" stroke-width="1.3"/></svg>
<div style="left:449px;top:1498.3px;width:19px;height:18.5px;background:#141414;border-radius:3px;"></div>
<svg style="left:451px;top:1500.3px;" width="15" height="15" viewBox="0 0 15 15"><path d="M1 14L14 1" stroke="#c8c8c8" stroke-width="1.8"/></svg>
<div style="left:515.7px;top:1498.3px;width:19px;height:18.5px;background:#141414;border-radius:3px;"></div>
<div style="left:538.6px;top:1498.3px;width:19px;height:18.5px;background:#141414;border-radius:3px;"></div>
<div style="left:561px;top:1498.3px;width:19px;height:18.5px;background:#141414;border-radius:3px;"></div>
<svg style="left:614.2px;top:1500.3px;" width="19" height="17" viewBox="0 0 19 17"><path d="M8.15 9.13 L8.25 9.27 L8.38 9.41 L8.54 9.53 L8.71 9.63 L8.91 9.72 L9.13 9.77 L9.36 9.80 L9.60 9.80 L9.85 9.77 L10.10 9.70 L10.35 9.59 L10.59 9.45 L10.82 9.27 L11.03 9.06 L11.22 8.82 L11.38 8.55 L11.51 8.25 L11.61 7.93 L11.66 7.59 L11.67 7.23 L11.64 6.87 L11.56 6.50 L11.43 6.14 L11.26 5.79 L11.04 5.45 L10.77 5.13 L10.46 4.85 L10.11 4.60 L9.72 4.39 L9.30 4.22 L8.85 4.10 L8.38 4.04 L7.90 4.04 L7.42 4.09 L6.93 4.21 L6.45 4.38 L5.99 4.62 L5.55 4.91 L5.14 5.27 L4.77 5.68 L4.45 6.13 L4.18 6.63 L3.97 7.17 L3.82 7.74 L3.74 8.33 L3.73 8.94 L3.80 9.55 L3.94 10.16 L4.16 10.76 L4.45 11.34 L4.81 11.89 L5.24 12.39 L5.74 12.85 L6.29 13.26 L6.90 13.59 L7.55 13.86 L8.24 14.05 L8.96 14.16 L9.70 14.18 L10.44 14.11 L11.17 13.95 L11.90 13.71 L12.60 13.37 L13.26 12.95 L13.87 12.45 L14.43 11.87 L14.92 11.22 L15.33 10.51 L15.66 9.74 L15.90 8.93 L16.05 8.09 L16.09 7.23 L16.03 6.36 L15.87 5.50 L15.60 4.65 L15.23 3.83 L14.76 3.05 L14.19 2.32 L13.54 1.66 L12.80 1.07" fill="none" stroke="#a8a8a8" stroke-width="1.5" stroke-linecap="round"/></svg>
<div style="left:642.5px;top:1497.8px;width:132.5px;height:20.3px;background:#000;border-radius:5px;"></div>
<div style="left:654.1px;top:1501px;font-size:16px;line-height:16px;color:#e8e8e8;white-space:pre;transform:scaleX(1.0458);transform-origin:0 0;">None</div>
<svg style="left:748px;top:1503.8px;" width="15" height="8.5" viewBox="0 0 15 8.5"><path d="M1 1l6.5 6.5l6.5 -6.5" fill="none" stroke="#e8e8e8" stroke-width="2.3"/></svg>
<div style="left:9.2px;top:1676.3px;width:19px;height:18.4px;background:#111;border-radius:3px;"></div>
<svg style="left:11px;top:1680.7px;" width="17" height="11" viewBox="0 0 17 11"><path d="M0.5 5.5C3 1.8 5.8 0.5 8.5 0.5s5.5 1.3 8 5c-2.5 3.7-5.3 5-8 5s-5.5-1.3-8-5z" fill="#c4c4c4"/><circle cx="8.5" cy="5.5" r="3" fill="#111"/><circle cx="9.2" cy="4.2" r="0.6" fill="#c4c4c4"/></svg>
<div style="left:54.4px;top:1676.3px;width:18.4px;height:18.4px;background:#0e0e0e;border-radius:3px;"></div>
<div style="left:77.2px;top:1676.3px;width:18.4px;height:18.4px;background:#0e0e0e;border-radius:3px;"></div>
<svg style="left:112px;top:1680.7px;" width="9" height="14" viewBox="0 0 9 14"><path d="M1.2 1.2l6.3 5.8-6.3 5.8" fill="none" stroke="#bdbdbd" stroke-width="2.4"/></svg>
<div style="left:130.1px;top:1677.5px;width:18.4px;height:17.9px;background:#6f80e6;"></div>
<div style="left:162.6px;top:1680px;font-size:16px;line-height:16px;color:#c8c8c8;white-space:pre;">3</div>
<svg style="left:207px;top:1678.3px;" width="18" height="17" viewBox="0 0 18 17"><path d="M9 0.5l2.6 5.6 6 0.6-4.5 4.1 1.3 6L9 13.7l-5.4 3.1 1.3-6L0.4 6.7l6-0.6z" fill="#c0c0c0"/></svg>
<div style="left:234.0px;top:1680px;font-size:16px;line-height:16px;color:#c8c8c8;white-space:pre;transform:scaleX(0.9724);transform-origin:0 0;">Shape Layer 2</div>
<div style="left:403.6px;top:1676.8px;width:19.8px;height:18.5px;background:#141414;border-radius:3px;"></div>
<svg style="left:405px;top:1678.8px;" width="17" height="14" viewBox="0 0 17 14"><path d="M2 7.5c0-4.5 3-7 6.5-7S15 3 15 7.5z" fill="#c8c8c8"/><rect x="7" y="7.5" width="3" height="4" fill="#c8c8c8"/><path d="M0 9.2h17M3 13h11" stroke="#c8c8c8" stroke-width="1.3"/><circle cx="6" cy="4.5" r="1.2" fill="#141414"/><circle cx="11" cy="4.5" r="1.2" fill="#141414"/></svg>
<div style="left:426.5px;top:1676.8px;width:18.5px;height:18.5px;background:#141414;border-radius:3px;"></div>
<svg style="left:428.5px;top:1678.8px;" width="14" height="14" viewBox="0 0 14 14"><circle cx="7" cy="7" r="2.8" fill="none" stroke="#6e6e6e" stroke-width="1.3"/><path d="M7 0v2.5M7 11.5V14M0 7h2.5M11.5 7H14M2 2l1.8 1.8M10.2 10.2L12 12M2 12l1.8-1.8M10.2 3.8L12 2" stroke="#6e6e6e" stroke-width="1.3"/></svg>
<div style="left:449px;top:1676.8px;width:19px;height:18.5px;background:#141414;border-radius:3px;"></div>
<svg style="left:451px;top:1678.8px;" width="15" height="15" viewBox="0 0 15 15"><path d="M1 14L14 1" stroke="#c8c8c8" stroke-width="1.8"/></svg>
<div style="left:515.7px;top:1676.8px;width:19px;height:18.5px;background:#141414;border-radius:3px;"></div>
<div style="left:538.6px;top:1676.8px;width:19px;height:18.5px;background:#141414;border-radius:3px;"></div>
<div style="left:561px;top:1676.8px;width:19px;height:18.5px;background:#141414;border-radius:3px;"></div>
<svg style="left:614.2px;top:1678.8px;" width="19" height="17" viewBox="0 0 19 17"><path d="M8.15 9.13 L8.25 9.27 L8.38 9.41 L8.54 9.53 L8.71 9.63 L8.91 9.72 L9.13 9.77 L9.36 9.80 L9.60 9.80 L9.85 9.77 L10.10 9.70 L10.35 9.59 L10.59 9.45 L10.82 9.27 L11.03 9.06 L11.22 8.82 L11.38 8.55 L11.51 8.25 L11.61 7.93 L11.66 7.59 L11.67 7.23 L11.64 6.87 L11.56 6.50 L11.43 6.14 L11.26 5.79 L11.04 5.45 L10.77 5.13 L10.46 4.85 L10.11 4.60 L9.72 4.39 L9.30 4.22 L8.85 4.10 L8.38 4.04 L7.90 4.04 L7.42 4.09 L6.93 4.21 L6.45 4.38 L5.99 4.62 L5.55 4.91 L5.14 5.27 L4.77 5.68 L4.45 6.13 L4.18 6.63 L3.97 7.17 L3.82 7.74 L3.74 8.33 L3.73 8.94 L3.80 9.55 L3.94 10.16 L4.16 10.76 L4.45 11.34 L4.81 11.89 L5.24 12.39 L5.74 12.85 L6.29 13.26 L6.90 13.59 L7.55 13.86 L8.24 14.05 L8.96 14.16 L9.70 14.18 L10.44 14.11 L11.17 13.95 L11.90 13.71 L12.60 13.37 L13.26 12.95 L13.87 12.45 L14.43 11.87 L14.92 11.22 L15.33 10.51 L15.66 9.74 L15.90 8.93 L16.05 8.09 L16.09 7.23 L16.03 6.36 L15.87 5.50 L15.60 4.65 L15.23 3.83 L14.76 3.05 L14.19 2.32 L13.54 1.66 L12.80 1.07" fill="none" stroke="#a8a8a8" stroke-width="1.5" stroke-linecap="round"/></svg>
<div style="left:642.5px;top:1676.3px;width:132.5px;height:20.3px;background:#000;border-radius:5px;"></div>
<div style="left:654.1px;top:1680px;font-size:16px;line-height:16px;color:#e8e8e8;white-space:pre;transform:scaleX(1.0458);transform-origin:0 0;">None</div>
<svg style="left:748px;top:1682.3px;" width="15" height="8.5" viewBox="0 0 15 8.5"><path d="M1 1l6.5 6.5l6.5 -6.5" fill="none" stroke="#e8e8e8" stroke-width="2.3"/></svg>
<div style="left:9.2px;top:1701.8px;width:19px;height:18.4px;background:#111;border-radius:3px;"></div>
<svg style="left:11px;top:1706.2px;" width="17" height="11" viewBox="0 0 17 11"><path d="M0.5 5.5C3 1.8 5.8 0.5 8.5 0.5s5.5 1.3 8 5c-2.5 3.7-5.3 5-8 5s-5.5-1.3-8-5z" fill="#c4c4c4"/><circle cx="8.5" cy="5.5" r="3" fill="#111"/><circle cx="9.2" cy="4.2" r="0.6" fill="#c4c4c4"/></svg>
<div style="left:54.4px;top:1701.8px;width:18.4px;height:18.4px;background:#0e0e0e;border-radius:3px;"></div>
<div style="left:77.2px;top:1701.8px;width:18.4px;height:18.4px;background:#0e0e0e;border-radius:3px;"></div>
<svg style="left:112px;top:1706.2px;" width="9" height="14" viewBox="0 0 9 14"><path d="M1.2 1.2l6.3 5.8-6.3 5.8" fill="none" stroke="#bdbdbd" stroke-width="2.4"/></svg>
<div style="left:130.1px;top:1703.0px;width:18.4px;height:17.9px;background:#aaaad0;"></div>
<div style="left:162.6px;top:1705px;font-size:16px;line-height:16px;color:#c8c8c8;white-space:pre;">4</div>
<svg style="left:208.5px;top:1702.8px;" width="15" height="19" viewBox="0 0 15 19"><path d="M0 0h10.5l4.5 4.5V19H0z" fill="#f2f2f2"/><path d="M10.5 0v4.5H15" fill="#bdbdbd"/></svg>
<div style="left:234.0px;top:1705px;font-size:16px;line-height:16px;color:#c8c8c8;white-space:pre;transform:scaleX(1.0122);transform-origin:0 0;">rasberry.jpg</div>
<div style="left:403.6px;top:1702.3px;width:19.8px;height:18.5px;background:#141414;border-radius:3px;"></div>
<svg style="left:405px;top:1704.3px;" width="17" height="14" viewBox="0 0 17 14"><path d="M2 7.5c0-4.5 3-7 6.5-7S15 3 15 7.5z" fill="#c8c8c8"/><rect x="7" y="7.5" width="3" height="4" fill="#c8c8c8"/><path d="M0 9.2h17M3 13h11" stroke="#c8c8c8" stroke-width="1.3"/><circle cx="6" cy="4.5" r="1.2" fill="#141414"/><circle cx="11" cy="4.5" r="1.2" fill="#141414"/></svg>
<div style="left:449px;top:1702.3px;width:19px;height:18.5px;background:#141414;border-radius:3px;"></div>
<svg style="left:451px;top:1704.3px;" width="15" height="15" viewBox="0 0 15 15"><path d="M1 14L14 1" stroke="#c8c8c8" stroke-width="1.8"/></svg>
<div style="left:515.7px;top:1702.3px;width:19px;height:18.5px;background:#141414;border-radius:3px;"></div>
<div style="left:538.6px;top:1702.3px;width:19px;height:18.5px;background:#141414;border-radius:3px;"></div>
<div style="left:561px;top:1702.3px;width:19px;height:18.5px;background:#141414;border-radius:3px;"></div>
<svg style="left:614.2px;top:1704.3px;" width="19" height="17" viewBox="0 0 19 17"><path d="M8.15 9.13 L8.25 9.27 L8.38 9.41 L8.54 9.53 L8.71 9.63 L8.91 9.72 L9.13 9.77 L9.36 9.80 L9.60 9.80 L9.85 9.77 L10.10 9.70 L10.35 9.59 L10.59 9.45 L10.82 9.27 L11.03 9.06 L11.22 8.82 L11.38 8.55 L11.51 8.25 L11.61 7.93 L11.66 7.59 L11.67 7.23 L11.64 6.87 L11.56 6.50 L11.43 6.14 L11.26 5.79 L11.04 5.45 L10.77 5.13 L10.46 4.85 L10.11 4.60 L9.72 4.39 L9.30 4.22 L8.85 4.10 L8.38 4.04 L7.90 4.04 L7.42 4.09 L6.93 4.21 L6.45 4.38 L5.99 4.62 L5.55 4.91 L5.14 5.27 L4.77 5.68 L4.45 6.13 L4.18 6.63 L3.97 7.17 L3.82 7.74 L3.74 8.33 L3.73 8.94 L3.80 9.55 L3.94 10.16 L4.16 10.76 L4.45 11.34 L4.81 11.89 L5.24 12.39 L5.74 12.85 L6.29 13.26 L6.90 13.59 L7.55 13.86 L8.24 14.05 L8.96 14.16 L9.70 14.18 L10.44 14.11 L11.17 13.95 L11.90 13.71 L12.60 13.37 L13.26 12.95 L13.87 12.45 L14.43 11.87 L14.92 11.22 L15.33 10.51 L15.66 9.74 L15.90 8.93 L16.05 8.09 L16.09 7.23 L16.03 6.36 L15.87 5.50 L15.60 4.65 L15.23 3.83 L14.76 3.05 L14.19 2.32 L13.54 1.66 L12.80 1.07" fill="none" stroke="#a8a8a8" stroke-width="1.5" stroke-linecap="round"/></svg>
<div style="left:642.5px;top:1701.8px;width:132.5px;height:20.3px;background:#000;border-radius:5px;"></div>
<div style="left:654.1px;top:1705px;font-size:16px;line-height:16px;color:#e8e8e8;white-space:pre;transform:scaleX(1.0458);transform-origin:0 0;">None</div>
<svg style="left:748px;top:1707.8px;" width="15" height="8.5" viewBox="0 0 15 8.5"><path d="M1 1l6.5 6.5l6.5 -6.5" fill="none" stroke="#e8e8e8" stroke-width="2.3"/></svg>
<div style="left:9.2px;top:1727.3px;width:19px;height:18.4px;background:#111;border-radius:3px;"></div>
<svg style="left:11px;top:1731.7px;" width="17" height="11" viewBox="0 0 17 11"><path d="M0.5 5.5C3 1.8 5.8 0.5 8.5 0.5s5.5 1.3 8 5c-2.5 3.7-5.3 5-8 5s-5.5-1.3-8-5z" fill="#c4c4c4"/><circle cx="8.5" cy="5.5" r="3" fill="#111"/><circle cx="9.2" cy="4.2" r="0.6" fill="#c4c4c4"/></svg>
<div style="left:54.4px;top:1727.3px;width:18.4px;height:18.4px;background:#0e0e0e;border-radius:3px;"></div>
<div style="left:77.2px;top:1727.3px;width:18.4px;height:18.4px;background:#0e0e0e;border-radius:3px;"></div>
<svg style="left:112px;top:1731.7px;" width="9" height="14" viewBox="0 0 9 14"><path d="M1.2 1.2l6.3 5.8-6.3 5.8" fill="none" stroke="#bdbdbd" stroke-width="2.4"/></svg>
<div style="left:130.1px;top:1728.5px;width:18.4px;height:17.9px;background:#a6cbc6;"></div>
<div style="left:162.6px;top:1731px;font-size:16px;line-height:16px;color:#c8c8c8;white-space:pre;">5</div>
<svg style="left:208.5px;top:1728.3px;" width="15" height="19" viewBox="0 0 15 19"><path d="M0 0h10.5l4.5 4.5V19H0z" fill="#f2f2f2"/><circle cx="7.5" cy="10.5" r="4.2" fill="#222"/><path d="M6.3 8.3v4.4l3.5-2.2z" fill="#fff"/><path d="M3.2 10.5a4.3 4.3 0 0 0 8.6 0" fill="none" stroke="#7a4ad8" stroke-width="1.2"/></svg>
<div style="left:234.0px;top:1731px;font-size:16px;line-height:16px;color:#c8c8c8;white-space:pre;transform:scaleX(1.0243);transform-origin:0 0;">discoball.mp4</div>
<div style="left:403.6px;top:1727.8px;width:19.8px;height:18.5px;background:#141414;border-radius:3px;"></div>
<svg style="left:405px;top:1729.8px;" width="17" height="14" viewBox="0 0 17 14"><path d="M2 7.5c0-4.5 3-7 6.5-7S15 3 15 7.5z" fill="#c8c8c8"/><rect x="7" y="7.5" width="3" height="4" fill="#c8c8c8"/><path d="M0 9.2h17M3 13h11" stroke="#c8c8c8" stroke-width="1.3"/><circle cx="6" cy="4.5" r="1.2" fill="#141414"/><circle cx="11" cy="4.5" r="1.2" fill="#141414"/></svg>
<div style="left:449px;top:1727.8px;width:19px;height:18.5px;background:#141414;border-radius:3px;"></div>
<svg style="left:451px;top:1729.8px;" width="15" height="15" viewBox="0 0 15 15"><path d="M1 14L14 1" stroke="#c8c8c8" stroke-width="1.8"/></svg>
<div style="left:492.5px;top:1727.8px;width:19px;height:18.5px;background:#141414;border-radius:3px;"></div>
<div style="left:515.7px;top:1727.8px;width:19px;height:18.5px;background:#141414;border-radius:3px;"></div>
<div style="left:538.6px;top:1727.8px;width:19px;height:18.5px;background:#141414;border-radius:3px;"></div>
<div style="left:561px;top:1727.8px;width:19px;height:18.5px;background:#141414;border-radius:3px;"></div>
<svg style="left:614.2px;top:1729.8px;" width="19" height="17" viewBox="0 0 19 17"><path d="M8.15 9.13 L8.25 9.27 L8.38 9.41 L8.54 9.53 L8.71 9.63 L8.91 9.72 L9.13 9.77 L9.36 9.80 L9.60 9.80 L9.85 9.77 L10.10 9.70 L10.35 9.59 L10.59 9.45 L10.82 9.27 L11.03 9.06 L11.22 8.82 L11.38 8.55 L11.51 8.25 L11.61 7.93 L11.66 7.59 L11.67 7.23 L11.64 6.87 L11.56 6.50 L11.43 6.14 L11.26 5.79 L11.04 5.45 L10.77 5.13 L10.46 4.85 L10.11 4.60 L9.72 4.39 L9.30 4.22 L8.85 4.10 L8.38 4.04 L7.90 4.04 L7.42 4.09 L6.93 4.21 L6.45 4.38 L5.99 4.62 L5.55 4.91 L5.14 5.27 L4.77 5.68 L4.45 6.13 L4.18 6.63 L3.97 7.17 L3.82 7.74 L3.74 8.33 L3.73 8.94 L3.80 9.55 L3.94 10.16 L4.16 10.76 L4.45 11.34 L4.81 11.89 L5.24 12.39 L5.74 12.85 L6.29 13.26 L6.90 13.59 L7.55 13.86 L8.24 14.05 L8.96 14.16 L9.70 14.18 L10.44 14.11 L11.17 13.95 L11.90 13.71 L12.60 13.37 L13.26 12.95 L13.87 12.45 L14.43 11.87 L14.92 11.22 L15.33 10.51 L15.66 9.74 L15.90 8.93 L16.05 8.09 L16.09 7.23 L16.03 6.36 L15.87 5.50 L15.60 4.65 L15.23 3.83 L14.76 3.05 L14.19 2.32 L13.54 1.66 L12.80 1.07" fill="none" stroke="#a8a8a8" stroke-width="1.5" stroke-linecap="round"/></svg>
<div style="left:642.5px;top:1727.3px;width:132.5px;height:20.3px;background:#000;border-radius:5px;"></div>
<div style="left:654.1px;top:1731px;font-size:16px;line-height:16px;color:#e8e8e8;white-space:pre;transform:scaleX(1.0458);transform-origin:0 0;">None</div>
<svg style="left:748px;top:1733.3px;" width="15" height="8.5" viewBox="0 0 15 8.5"><path d="M1 1l6.5 6.5l6.5 -6.5" fill="none" stroke="#e8e8e8" stroke-width="2.3"/></svg>
<div style="left:9.2px;top:1752.8px;width:19px;height:18.4px;background:#111;border-radius:3px;"></div>
<svg style="left:11px;top:1757.2px;" width="17" height="11" viewBox="0 0 17 11"><path d="M0.5 5.5C3 1.8 5.8 0.5 8.5 0.5s5.5 1.3 8 5c-2.5 3.7-5.3 5-8 5s-5.5-1.3-8-5z" fill="#c4c4c4"/><circle cx="8.5" cy="5.5" r="3" fill="#111"/><circle cx="9.2" cy="4.2" r="0.6" fill="#c4c4c4"/></svg>
<div style="left:54.4px;top:1752.8px;width:18.4px;height:18.4px;background:#0e0e0e;border-radius:3px;"></div>
<div style="left:77.2px;top:1752.8px;width:18.4px;height:18.4px;background:#0e0e0e;border-radius:3px;"></div>
<svg style="left:79.6px;top:1754.8px;" width="14" height="15" viewBox="0 0 14 15"><path d="M3.5 7V5a3.5 3.5 0 0 1 7 0v2" fill="none" stroke="#b8b8b8" stroke-width="1.8"/><rect x="1" y="7" width="12" height="8" fill="#b8b8b8"/><rect x="6" y="9.5" width="2" height="3" fill="#111"/></svg>
<svg style="left:112px;top:1757.2px;" width="9" height="14" viewBox="0 0 9 14"><path d="M1.2 1.2l6.3 5.8-6.3 5.8" fill="none" stroke="#bdbdbd" stroke-width="2.4"/></svg>
<div style="left:130.1px;top:1754.0px;width:18.4px;height:17.9px;background:#6f80e6;"></div>
<div style="left:162.6px;top:1756px;font-size:16px;line-height:16px;color:#c8c8c8;white-space:pre;">6</div>
<svg style="left:207px;top:1754.8px;" width="18" height="17" viewBox="0 0 18 17"><path d="M9 0.5l2.6 5.6 6 0.6-4.5 4.1 1.3 6L9 13.7l-5.4 3.1 1.3-6L0.4 6.7l6-0.6z" fill="#c0c0c0"/></svg>
<div style="left:234.0px;top:1756px;font-size:16px;line-height:16px;color:#c8c8c8;white-space:pre;transform:scaleX(0.9724);transform-origin:0 0;">Shape Layer 1</div>
<div style="left:403.6px;top:1753.3px;width:19.8px;height:18.5px;background:#141414;border-radius:3px;"></div>
<svg style="left:405px;top:1755.3px;" width="17" height="14" viewBox="0 0 17 14"><path d="M2 7.5c0-4.5 3-7 6.5-7S15 3 15 7.5z" fill="#c8c8c8"/><rect x="7" y="7.5" width="3" height="4" fill="#c8c8c8"/><path d="M0 9.2h17M3 13h11" stroke="#c8c8c8" stroke-width="1.3"/><circle cx="6" cy="4.5" r="1.2" fill="#141414"/><circle cx="11" cy="4.5" r="1.2" fill="#141414"/></svg>
<div style="left:426.5px;top:1753.3px;width:18.5px;height:18.5px;background:#141414;border-radius:3px;"></div>
<svg style="left:428.5px;top:1755.3px;" width="14" height="14" viewBox="0 0 14 14"><circle cx="7" cy="7" r="2.8" fill="none" stroke="#6e6e6e" stroke-width="1.3"/><path d="M7 0v2.5M7 11.5V14M0 7h2.5M11.5 7H14M2 2l1.8 1.8M10.2 10.2L12 12M2 12l1.8-1.8M10.2 3.8L12 2" stroke="#6e6e6e" stroke-width="1.3"/></svg>
<div style="left:449px;top:1753.3px;width:19px;height:18.5px;background:#141414;border-radius:3px;"></div>
<svg style="left:451px;top:1755.3px;" width="15" height="15" viewBox="0 0 15 15"><path d="M1 14L14 1" stroke="#c8c8c8" stroke-width="1.8"/></svg>
<div style="left:515.7px;top:1753.3px;width:19px;height:18.5px;background:#141414;border-radius:3px;"></div>
<div style="left:538.6px;top:1753.3px;width:19px;height:18.5px;background:#141414;border-radius:3px;"></div>
<div style="left:561px;top:1753.3px;width:19px;height:18.5px;background:#141414;border-radius:3px;"></div>
<svg style="left:614.2px;top:1755.3px;" width="19" height="17" viewBox="0 0 19 17"><path d="M8.15 9.13 L8.25 9.27 L8.38 9.41 L8.54 9.53 L8.71 9.63 L8.91 9.72 L9.13 9.77 L9.36 9.80 L9.60 9.80 L9.85 9.77 L10.10 9.70 L10.35 9.59 L10.59 9.45 L10.82 9.27 L11.03 9.06 L11.22 8.82 L11.38 8.55 L11.51 8.25 L11.61 7.93 L11.66 7.59 L11.67 7.23 L11.64 6.87 L11.56 6.50 L11.43 6.14 L11.26 5.79 L11.04 5.45 L10.77 5.13 L10.46 4.85 L10.11 4.60 L9.72 4.39 L9.30 4.22 L8.85 4.10 L8.38 4.04 L7.90 4.04 L7.42 4.09 L6.93 4.21 L6.45 4.38 L5.99 4.62 L5.55 4.91 L5.14 5.27 L4.77 5.68 L4.45 6.13 L4.18 6.63 L3.97 7.17 L3.82 7.74 L3.74 8.33 L3.73 8.94 L3.80 9.55 L3.94 10.16 L4.16 10.76 L4.45 11.34 L4.81 11.89 L5.24 12.39 L5.74 12.85 L6.29 13.26 L6.90 13.59 L7.55 13.86 L8.24 14.05 L8.96 14.16 L9.70 14.18 L10.44 14.11 L11.17 13.95 L11.90 13.71 L12.60 13.37 L13.26 12.95 L13.87 12.45 L14.43 11.87 L14.92 11.22 L15.33 10.51 L15.66 9.74 L15.90 8.93 L16.05 8.09 L16.09 7.23 L16.03 6.36 L15.87 5.50 L15.60 4.65 L15.23 3.83 L14.76 3.05 L14.19 2.32 L13.54 1.66 L12.80 1.07" fill="none" stroke="#a8a8a8" stroke-width="1.5" stroke-linecap="round"/></svg>
<div style="left:642.5px;top:1752.8px;width:132.5px;height:20.3px;background:#000;border-radius:5px;"></div>
<div style="left:654.1px;top:1756px;font-size:16px;line-height:16px;color:#e8e8e8;white-space:pre;transform:scaleX(1.0458);transform-origin:0 0;">None</div>
<svg style="left:748px;top:1758.8px;" width="15" height="8.5" viewBox="0 0 15 8.5"><path d="M1 1l6.5 6.5l6.5 -6.5" fill="none" stroke="#e8e8e8" stroke-width="2.3"/></svg>
<svg style="left:137.9px;top:1527.7px;" width="9" height="14" viewBox="0 0 9 14"><path d="M1.2 1.2l6.3 5.8-6.3 5.8" fill="none" stroke="#bdbdbd" stroke-width="2.4"/></svg>
<div style="left:162.1px;top:1527px;font-size:16px;line-height:16px;color:#c8c8c8;white-space:pre;transform:scaleX(1.0599);transform-origin:0 0;">Text</div>
<div style="left:513.5px;top:1527px;font-size:16px;line-height:16px;color:#c8c8c8;white-space:pre;transform:scaleX(1.0184);transform-origin:0 0;">Animate:</div>
<svg style="left:583px;top:1525.8px;" width="16" height="16" viewBox="0 0 16 16"><circle cx="8" cy="8" r="8" fill="#d0d0d0"/><path d="M6 4.5v7l5.5-3.5z" fill="#1e1e1e"/></svg>
<svg style="left:138.5px;top:1555.8px;" width="14" height="9" viewBox="0 0 14 9"><path d="M1.2 1.2l5.8 5.8 5.8-5.8" fill="none" stroke="#bdbdbd" stroke-width="2.4"/></svg>
<div style="left:162.4px;top:1552px;font-size:16px;line-height:16px;color:#c8c8c8;white-space:pre;transform:scaleX(1.0207);transform-origin:0 0;">Transform</div>
<div style="left:404.3px;top:1551px;font-size:16px;line-height:16px;color:#4a9df5;white-space:pre;transform:scaleX(0.9140);transform-origin:0 0;">Reset</div>
<div style="left:167.3px;top:1583.8px;width:1.5px;height:1.5px;background:#555;"></div>
<svg style="left:184px;top:1574.8px;" width="18" height="19" viewBox="0 0 18 19"><circle cx="9" cy="10.5" r="7" fill="none" stroke="#c0c0c0" stroke-width="1.6"/><path d="M6.5 1.5h5M9 1.5v2" stroke="#c0c0c0" stroke-width="1.6"/></svg>
<div style="left:211.7px;top:1578px;font-size:16px;line-height:16px;color:#c8c8c8;white-space:pre;transform:scaleX(1.0349);transform-origin:0 0;">Anchor Point</div>
<div style="left:405.0px;top:1578px;font-size:16px;line-height:16px;color:#4a9df5;white-space:pre;transform:scaleX(0.9811);transform-origin:0 0;">0.0,0.0</div>
<svg style="left:634px;top:1576.8px;" width="19" height="17" viewBox="0 0 19 17"><path d="M8.15 9.13 L8.25 9.27 L8.38 9.41 L8.54 9.53 L8.71 9.63 L8.91 9.72 L9.13 9.77 L9.36 9.80 L9.60 9.80 L9.85 9.77 L10.10 9.70 L10.35 9.59 L10.59 9.45 L10.82 9.27 L11.03 9.06 L11.22 8.82 L11.38 8.55 L11.51 8.25 L11.61 7.93 L11.66 7.59 L11.67 7.23 L11.64 6.87 L11.56 6.50 L11.43 6.14 L11.26 5.79 L11.04 5.45 L10.77 5.13 L10.46 4.85 L10.11 4.60 L9.72 4.39 L9.30 4.22 L8.85 4.10 L8.38 4.04 L7.90 4.04 L7.42 4.09 L6.93 4.21 L6.45 4.38 L5.99 4.62 L5.55 4.91 L5.14 5.27 L4.77 5.68 L4.45 6.13 L4.18 6.63 L3.97 7.17 L3.82 7.74 L3.74 8.33 L3.73 8.94 L3.80 9.55 L3.94 10.16 L4.16 10.76 L4.45 11.34 L4.81 11.89 L5.24 12.39 L5.74 12.85 L6.29 13.26 L6.90 13.59 L7.55 13.86 L8.24 14.05 L8.96 14.16 L9.70 14.18 L10.44 14.11 L11.17 13.95 L11.90 13.71 L12.60 13.37 L13.26 12.95 L13.87 12.45 L14.43 11.87 L14.92 11.22 L15.33 10.51 L15.66 9.74 L15.90 8.93 L16.05 8.09 L16.09 7.23 L16.03 6.36 L15.87 5.50 L15.60 4.65 L15.23 3.83 L14.76 3.05 L14.19 2.32 L13.54 1.66 L12.80 1.07" fill="none" stroke="#a8a8a8" stroke-width="1.5" stroke-linecap="round"/></svg>
<div style="left:167.3px;top:1609.3px;width:1.5px;height:1.5px;background:#555;"></div>
<svg style="left:184px;top:1600.3px;" width="18" height="19" viewBox="0 0 18 19"><circle cx="9" cy="10.5" r="7" fill="none" stroke="#c0c0c0" stroke-width="1.6"/><path d="M6.5 1.5h5M9 1.5v2" stroke="#c0c0c0" stroke-width="1.6"/></svg>
<div style="left:211.7px;top:1604px;font-size:16px;line-height:16px;color:#c8c8c8;white-space:pre;transform:scaleX(1.0172);transform-origin:0 0;">Position</div>
<div style="left:405.0px;top:1603px;font-size:16px;line-height:16px;color:#4a9df5;white-space:pre;">959.0,442.9</div>
<svg style="left:634px;top:1602.3px;" width="19" height="17" viewBox="0 0 19 17"><path d="M8.15 9.13 L8.25 9.27 L8.38 9.41 L8.54 9.53 L8.71 9.63 L8.91 9.72 L9.13 9.77 L9.36 9.80 L9.60 9.80 L9.85 9.77 L10.10 9.70 L10.35 9.59 L10.59 9.45 L10.82 9.27 L11.03 9.06 L11.22 8.82 L11.38 8.55 L11.51 8.25 L11.61 7.93 L11.66 7.59 L11.67 7.23 L11.64 6.87 L11.56 6.50 L11.43 6.14 L11.26 5.79 L11.04 5.45 L10.77 5.13 L10.46 4.85 L10.11 4.60 L9.72 4.39 L9.30 4.22 L8.85 4.10 L8.38 4.04 L7.90 4.04 L7.42 4.09 L6.93 4.21 L6.45 4.38 L5.99 4.62 L5.55 4.91 L5.14 5.27 L4.77 5.68 L4.45 6.13 L4.18 6.63 L3.97 7.17 L3.82 7.74 L3.74 8.33 L3.73 8.94 L3.80 9.55 L3.94 10.16 L4.16 10.76 L4.45 11.34 L4.81 11.89 L5.24 12.39 L5.74 12.85 L6.29 13.26 L6.90 13.59 L7.55 13.86 L8.24 14.05 L8.96 14.16 L9.70 14.18 L10.44 14.11 L11.17 13.95 L11.90 13.71 L12.60 13.37 L13.26 12.95 L13.87 12.45 L14.43 11.87 L14.92 11.22 L15.33 10.51 L15.66 9.74 L15.90 8.93 L16.05 8.09 L16.09 7.23 L16.03 6.36 L15.87 5.50 L15.60 4.65 L15.23 3.83 L14.76 3.05 L14.19 2.32 L13.54 1.66 L12.80 1.07" fill="none" stroke="#a8a8a8" stroke-width="1.5" stroke-linecap="round"/></svg>
<div style="left:167.3px;top:1634.8px;width:1.5px;height:1.5px;background:#555;"></div>
<svg style="left:184px;top:1625.8px;" width="18" height="19" viewBox="0 0 18 19"><circle cx="9" cy="10.5" r="7" fill="none" stroke="#c0c0c0" stroke-width="1.6"/><path d="M6.5 1.5h5M9 1.5v2" stroke="#c0c0c0" stroke-width="1.6"/></svg>
<div style="left:211.7px;top:1629px;font-size:16px;line-height:16px;color:#c8c8c8;white-space:pre;transform:scaleX(1.0287);transform-origin:0 0;">Rotation</div>
<div style="left:405.0px;top:1629px;font-size:16px;line-height:16px;color:#4a9df5;white-space:pre;transform:scaleX(1.0313);transform-origin:0 0;">0x+0.0°</div>
<svg style="left:634px;top:1627.8px;" width="19" height="17" viewBox="0 0 19 17"><path d="M8.15 9.13 L8.25 9.27 L8.38 9.41 L8.54 9.53 L8.71 9.63 L8.91 9.72 L9.13 9.77 L9.36 9.80 L9.60 9.80 L9.85 9.77 L10.10 9.70 L10.35 9.59 L10.59 9.45 L10.82 9.27 L11.03 9.06 L11.22 8.82 L11.38 8.55 L11.51 8.25 L11.61 7.93 L11.66 7.59 L11.67 7.23 L11.64 6.87 L11.56 6.50 L11.43 6.14 L11.26 5.79 L11.04 5.45 L10.77 5.13 L10.46 4.85 L10.11 4.60 L9.72 4.39 L9.30 4.22 L8.85 4.10 L8.38 4.04 L7.90 4.04 L7.42 4.09 L6.93 4.21 L6.45 4.38 L5.99 4.62 L5.55 4.91 L5.14 5.27 L4.77 5.68 L4.45 6.13 L4.18 6.63 L3.97 7.17 L3.82 7.74 L3.74 8.33 L3.73 8.94 L3.80 9.55 L3.94 10.16 L4.16 10.76 L4.45 11.34 L4.81 11.89 L5.24 12.39 L5.74 12.85 L6.29 13.26 L6.90 13.59 L7.55 13.86 L8.24 14.05 L8.96 14.16 L9.70 14.18 L10.44 14.11 L11.17 13.95 L11.90 13.71 L12.60 13.37 L13.26 12.95 L13.87 12.45 L14.43 11.87 L14.92 11.22 L15.33 10.51 L15.66 9.74 L15.90 8.93 L16.05 8.09 L16.09 7.23 L16.03 6.36 L15.87 5.50 L15.60 4.65 L15.23 3.83 L14.76 3.05 L14.19 2.32 L13.54 1.66 L12.80 1.07" fill="none" stroke="#a8a8a8" stroke-width="1.5" stroke-linecap="round"/></svg>
<svg style="left:14.3px;top:1655.8px;" width="11.2" height="11.7" viewBox="0 0 11.2 11.7"><path d="M11.2 0v11.7L0 5.85z" fill="#777"/></svg>
<svg style="left:35.7px;top:1654.8px;" width="13" height="13" viewBox="0 0 13 13"><path d="M6.5 0.8l5.7 5.7-5.7 5.7-5.7-5.7z" fill="none" stroke="#bbb" stroke-width="1.4"/></svg>
<svg style="left:59px;top:1655.8px;" width="10.4" height="11.7" viewBox="0 0 10.4 11.7"><path d="M0 0v11.7l10.4-5.85z" fill="#bbb"/></svg>
<div style="left:167.3px;top:1660.3px;width:1.5px;height:1.5px;background:#555;"></div>
<div style="left:182px;top:1649.8px;width:22.7px;height:23px;background:#0e0e0e;border-radius:4px;"></div>
<svg style="left:184.5px;top:1651.8px;" width="18" height="19" viewBox="0 0 18 19"><circle cx="9" cy="10.5" r="7" fill="none" stroke="#3d8ee8" stroke-width="1.8"/><path d="M6.5 1.5h5M9 1.5v2M9 10.5l3-4" stroke="#3d8ee8" stroke-width="1.8"/></svg>
<svg style="left:211.7px;top:1652.8px;" width="17" height="16" viewBox="0 0 17 16"><path d="M1 0v15h16" fill="none" stroke="#b0b0b0" stroke-width="1.4"/><path d="M3 6l4 6 4-6 4 4" fill="none" stroke="#b0b0b0" stroke-width="1.4"/></svg>
<div style="left:240.3px;top:1655px;font-size:16px;line-height:16px;color:#c8c8c8;white-space:pre;transform:scaleX(1.0159);transform-origin:0 0;">Opacity</div>
<div style="left:405.0px;top:1654px;font-size:16px;line-height:16px;color:#4a9df5;white-space:pre;transform:scaleX(1.0681);transform-origin:0 0;">0%</div>
<svg style="left:634px;top:1653.3px;" width="19" height="17" viewBox="0 0 19 17"><path d="M8.15 9.13 L8.25 9.27 L8.38 9.41 L8.54 9.53 L8.71 9.63 L8.91 9.72 L9.13 9.77 L9.36 9.80 L9.60 9.80 L9.85 9.77 L10.10 9.70 L10.35 9.59 L10.59 9.45 L10.82 9.27 L11.03 9.06 L11.22 8.82 L11.38 8.55 L11.51 8.25 L11.61 7.93 L11.66 7.59 L11.67 7.23 L11.64 6.87 L11.56 6.50 L11.43 6.14 L11.26 5.79 L11.04 5.45 L10.77 5.13 L10.46 4.85 L10.11 4.60 L9.72 4.39 L9.30 4.22 L8.85 4.10 L8.38 4.04 L7.90 4.04 L7.42 4.09 L6.93 4.21 L6.45 4.38 L5.99 4.62 L5.55 4.91 L5.14 5.27 L4.77 5.68 L4.45 6.13 L4.18 6.63 L3.97 7.17 L3.82 7.74 L3.74 8.33 L3.73 8.94 L3.80 9.55 L3.94 10.16 L4.16 10.76 L4.45 11.34 L4.81 11.89 L5.24 12.39 L5.74 12.85 L6.29 13.26 L6.90 13.59 L7.55 13.86 L8.24 14.05 L8.96 14.16 L9.70 14.18 L10.44 14.11 L11.17 13.95 L11.90 13.71 L12.60 13.37 L13.26 12.95 L13.87 12.45 L14.43 11.87 L14.92 11.22 L15.33 10.51 L15.66 9.74 L15.90 8.93 L16.05 8.09 L16.09 7.23 L16.03 6.36 L15.87 5.50 L15.60 4.65 L15.23 3.83 L14.76 3.05 L14.19 2.32 L13.54 1.66 L12.80 1.07" fill="none" stroke="#a8a8a8" stroke-width="1.5" stroke-linecap="round"/></svg>
<div style="left:807.5px;top:1395.5px;width:2534.5px;height:1.5px;background:#0e0e0e;"></div>
<div style="left:808px;top:1396.8px;width:2524px;height:12.2px;background:#6a6a6a;"></div>
<div style="left:808px;top:1396.8px;width:11px;height:12.2px;background:#3d93f0;border-radius:6px 0 0 6px;"></div>
<div style="left:817.5px;top:1396.8px;width:1.5px;height:12.2px;background:#6a6a6a;"></div>
<div style="left:3331.7px;top:1396.8px;width:10.5px;height:12.2px;background:#3d93f0;border-radius:0 6px 6px 0;"></div>
<div style="left:807.5px;top:1409px;width:2534.5px;height:1.5px;background:#0e0e0e;"></div>
<div style="left:809.0px;top:1414px;font-size:15px;line-height:15px;color:#c4c4c4;white-space:pre;transform:scaleX(0.9221);transform-origin:0 0;">00s</div>
<div style="left:819.4px;top:1431.7px;width:1.5px;height:7.3px;background:#bdbdbd;"></div>
<div style="left:892.6px;top:1414px;font-size:15px;line-height:15px;color:#c4c4c4;white-space:pre;transform:scaleX(0.9221);transform-origin:0 0;">01s</div>
<div style="left:903.04px;top:1431.7px;width:1.5px;height:7.3px;background:#bdbdbd;"></div>
<div style="left:976.2px;top:1414px;font-size:15px;line-height:15px;color:#c4c4c4;white-space:pre;transform:scaleX(0.9221);transform-origin:0 0;">02s</div>
<div style="left:986.68px;top:1431.7px;width:1.5px;height:7.3px;background:#bdbdbd;"></div>
<div style="left:1059.9px;top:1414px;font-size:15px;line-height:15px;color:#c4c4c4;white-space:pre;transform:scaleX(0.9221);transform-origin:0 0;">03s</div>
<div style="left:1070.32px;top:1431.7px;width:1.5px;height:7.3px;background:#bdbdbd;"></div>
<div style="left:1143.5px;top:1414px;font-size:15px;line-height:15px;color:#c4c4c4;white-space:pre;transform:scaleX(0.9221);transform-origin:0 0;">04s</div>
<div style="left:1153.96px;top:1431.7px;width:1.5px;height:7.3px;background:#bdbdbd;"></div>
<div style="left:1227.1px;top:1414px;font-size:15px;line-height:15px;color:#c4c4c4;white-space:pre;transform:scaleX(0.9221);transform-origin:0 0;">05s</div>
<div style="left:1237.6px;top:1431.7px;width:1.5px;height:7.3px;background:#bdbdbd;"></div>
<div style="left:1310.8px;top:1414px;font-size:15px;line-height:15px;color:#c4c4c4;white-space:pre;transform:scaleX(0.9221);transform-origin:0 0;">06s</div>
<div style="left:1321.24px;top:1431.7px;width:1.5px;height:7.3px;background:#bdbdbd;"></div>
<div style="left:1394.4px;top:1414px;font-size:15px;line-height:15px;color:#c4c4c4;white-space:pre;transform:scaleX(0.9221);transform-origin:0 0;">07s</div>
<div style="left:1404.8799999999999px;top:1431.7px;width:1.5px;height:7.3px;background:#bdbdbd;"></div>
<div style="left:1478.1px;top:1414px;font-size:15px;line-height:15px;color:#c4c4c4;white-space:pre;transform:scaleX(0.9221);transform-origin:0 0;">08s</div>
<div style="left:1488.52px;top:1431.7px;width:1.5px;height:7.3px;background:#bdbdbd;"></div>
<div style="left:1561.7px;top:1414px;font-size:15px;line-height:15px;color:#c4c4c4;white-space:pre;transform:scaleX(0.9221);transform-origin:0 0;">09s</div>
<div style="left:1572.16px;top:1431.7px;width:1.5px;height:7.3px;background:#bdbdbd;"></div>
<div style="left:1645.3px;top:1414px;font-size:15px;line-height:15px;color:#c4c4c4;white-space:pre;transform:scaleX(0.9221);transform-origin:0 0;">10s</div>
<div style="left:1655.8px;top:1431.7px;width:1.5px;height:7.3px;background:#bdbdbd;"></div>
<div style="left:1729.0px;top:1414px;font-size:15px;line-height:15px;color:#c4c4c4;white-space:pre;transform:scaleX(0.9666);transform-origin:0 0;">11s</div>
<div style="left:1739.4399999999998px;top:1431.7px;width:1.5px;height:15.8px;background:#8a8a8a;"></div>
<div style="left:1812.6px;top:1414px;font-size:15px;line-height:15px;color:#c4c4c4;white-space:pre;transform:scaleX(0.9221);transform-origin:0 0;">12s</div>
<div style="left:1823.0800000000002px;top:1431.7px;width:1.5px;height:15.8px;background:#8a8a8a;"></div>
<div style="left:1896.3px;top:1414px;font-size:15px;line-height:15px;color:#c4c4c4;white-space:pre;transform:scaleX(0.9221);transform-origin:0 0;">13s</div>
<div style="left:1906.72px;top:1431.7px;width:1.5px;height:15.8px;background:#8a8a8a;"></div>
<div style="left:1979.9px;top:1414px;font-size:15px;line-height:15px;color:#c4c4c4;white-space:pre;transform:scaleX(0.9221);transform-origin:0 0;">14s</div>
<div style="left:1990.36px;top:1431.7px;width:1.5px;height:15.8px;background:#8a8a8a;"></div>
<div style="left:2063.5px;top:1414px;font-size:15px;line-height:15px;color:#c4c4c4;white-space:pre;transform:scaleX(0.9221);transform-origin:0 0;">15s</div>
<div style="left:2074.0px;top:1431.7px;width:1.5px;height:15.8px;background:#8a8a8a;"></div>
<div style="left:2147.2px;top:1414px;font-size:15px;line-height:15px;color:#c4c4c4;white-space:pre;transform:scaleX(0.9221);transform-origin:0 0;">16s</div>
<div style="left:2157.6400000000003px;top:1431.7px;width:1.5px;height:15.8px;background:#8a8a8a;"></div>
<div style="left:2230.8px;top:1414px;font-size:15px;line-height:15px;color:#c4c4c4;white-space:pre;transform:scaleX(0.9221);transform-origin:0 0;">17s</div>
<div style="left:2241.28px;top:1431.7px;width:1.5px;height:15.8px;background:#8a8a8a;"></div>
<div style="left:2314.5px;top:1414px;font-size:15px;line-height:15px;color:#c4c4c4;white-space:pre;transform:scaleX(0.9221);transform-origin:0 0;">18s</div>
<div style="left:2324.92px;top:1431.7px;width:1.5px;height:15.8px;background:#8a8a8a;"></div>
<div style="left:2398.1px;top:1414px;font-size:15px;line-height:15px;color:#c4c4c4;white-space:pre;transform:scaleX(0.9221);transform-origin:0 0;">19s</div>
<div style="left:2408.5600000000004px;top:1431.7px;width:1.5px;height:15.8px;background:#8a8a8a;"></div>
<div style="left:2481.8px;top:1414px;font-size:15px;line-height:15px;color:#c4c4c4;white-space:pre;transform:scaleX(0.9221);transform-origin:0 0;">20s</div>
<div style="left:2492.2000000000003px;top:1431.7px;width:1.5px;height:15.8px;background:#8a8a8a;"></div>
<div style="left:2565.4px;top:1414px;font-size:15px;line-height:15px;color:#c4c4c4;white-space:pre;transform:scaleX(0.9221);transform-origin:0 0;">21s</div>
<div style="left:2575.84px;top:1431.7px;width:1.5px;height:15.8px;background:#8a8a8a;"></div>
<div style="left:2649.0px;top:1414px;font-size:15px;line-height:15px;color:#c4c4c4;white-space:pre;transform:scaleX(0.9221);transform-origin:0 0;">22s</div>
<div style="left:2659.48px;top:1431.7px;width:1.5px;height:15.8px;background:#8a8a8a;"></div>
<div style="left:2732.7px;top:1414px;font-size:15px;line-height:15px;color:#c4c4c4;white-space:pre;transform:scaleX(0.9221);transform-origin:0 0;">23s</div>
<div style="left:2743.1200000000003px;top:1431.7px;width:1.5px;height:15.8px;background:#8a8a8a;"></div>
<div style="left:2816.3px;top:1414px;font-size:15px;line-height:15px;color:#c4c4c4;white-space:pre;transform:scaleX(0.9221);transform-origin:0 0;">24s</div>
<div style="left:2826.76px;top:1431.7px;width:1.5px;height:15.8px;background:#8a8a8a;"></div>
<div style="left:2899.9px;top:1414px;font-size:15px;line-height:15px;color:#c4c4c4;white-space:pre;transform:scaleX(0.9221);transform-origin:0 0;">25s</div>
<div style="left:2910.4px;top:1431.7px;width:1.5px;height:15.8px;background:#8a8a8a;"></div>
<div style="left:2983.6px;top:1414px;font-size:15px;line-height:15px;color:#c4c4c4;white-space:pre;transform:scaleX(0.9221);transform-origin:0 0;">26s</div>
<div style="left:2994.04px;top:1431.7px;width:1.5px;height:15.8px;background:#8a8a8a;"></div>
<div style="left:3067.2px;top:1414px;font-size:15px;line-height:15px;color:#c4c4c4;white-space:pre;transform:scaleX(0.9221);transform-origin:0 0;">27s</div>
<div style="left:3077.6800000000003px;top:1431.7px;width:1.5px;height:15.8px;background:#8a8a8a;"></div>
<div style="left:3150.9px;top:1414px;font-size:15px;line-height:15px;color:#c4c4c4;white-space:pre;transform:scaleX(0.9221);transform-origin:0 0;">28s</div>
<div style="left:3161.32px;top:1431.7px;width:1.5px;height:15.8px;background:#8a8a8a;"></div>
<div style="left:3234.5px;top:1414px;font-size:15px;line-height:15px;color:#c4c4c4;white-space:pre;transform:scaleX(0.9221);transform-origin:0 0;">29s</div>
<div style="left:3244.96px;top:1431.7px;width:1.5px;height:15.8px;background:#8a8a8a;"></div>
<div style="left:3318.1px;top:1414px;font-size:15px;line-height:15px;color:#c4c4c4;white-space:pre;transform:scaleX(0.9221);transform-origin:0 0;">30s</div>
<div style="left:3328.6px;top:1431.7px;width:1.5px;height:15.8px;background:#8a8a8a;"></div>
<div style="left:807.5px;top:1439.5px;width:853.5999999999999px;height:1px;background:#0e0e0e;"></div>
<div style="left:818px;top:1440.3px;width:843.0999999999999px;height:22.6px;background:#666666;"></div>
<div style="left:808px;top:1440.3px;width:10.5px;height:22.6px;background:#3d93f0;border-radius:6px 0 0 6px;"></div>
<div style="left:1661.1px;top:1440.3px;width:9px;height:22.6px;background:#3d93f0;border-radius:0 6px 6px 0;"></div>
<div style="left:807.5px;top:1462.9px;width:2534.5px;height:1.3px;background:#0e0e0e;"></div>
<div style="left:807.5px;top:1464.2px;width:2534.5px;height:4.7px;background:#262626;"></div>
<div style="left:818px;top:1464.2px;width:845.7px;height:4.7px;background:#12c425;"></div>
<div style="left:818px;top:1470.6px;width:2513.7px;height:23.9px;background:#743535;"></div>
<div style="left:1426px;top:1496.1px;width:237.70000000000005px;height:23.9px;background:#743838;"></div>
<div style="left:1426px;top:1674.6px;width:237.70000000000005px;height:23.9px;background:#4d5a8f;"></div>
<div style="left:818px;top:1700.1px;width:2513.7px;height:23.9px;background:#6e6d82;"></div>
<div style="left:818px;top:1725.6px;width:621.5999999999999px;height:23.9px;background:#6d7e7a;border-radius:7px 7px 0 0;"></div>
<div style="left:818px;top:1751.1px;width:2513.7px;height:23.9px;background:#4d5a8f;"></div>
<svg style="left:818px;top:1526.3px;" width="9" height="14" viewBox="0 0 9 14"><path d="M1 1h7M1 13h7M4.5 1v12" stroke="#bdbdbd" stroke-width="1.8"/></svg>
<svg style="left:818px;top:1551.8px;" width="9" height="14" viewBox="0 0 9 14"><path d="M1 1h7M1 13h7M4.5 1v12" stroke="#bdbdbd" stroke-width="1.8"/></svg>
<svg style="left:818px;top:1577.3px;" width="9" height="14" viewBox="0 0 9 14"><path d="M1 1h7M1 13h7M4.5 1v12" stroke="#bdbdbd" stroke-width="1.8"/></svg>
<svg style="left:818px;top:1602.8px;" width="9" height="14" viewBox="0 0 9 14"><path d="M1 1h7M1 13h7M4.5 1v12" stroke="#bdbdbd" stroke-width="1.8"/></svg>
<svg style="left:818px;top:1628.3px;" width="9" height="14" viewBox="0 0 9 14"><path d="M1 1h7M1 13h7M4.5 1v12" stroke="#bdbdbd" stroke-width="1.8"/></svg>
<svg style="left:1462.5px;top:1654.3px;" width="14" height="14" viewBox="0 0 14 14"><path d="M7 0L14 7 7 14 0 7z" fill="#8a8a8a"/><path d="M7 0L14 7 7 14z" fill="#d0d0d0"/></svg>
<svg style="left:1484.8px;top:1654.3px;" width="14" height="14" viewBox="0 0 14 14"><path d="M7 0L14 7 7 14 0 7z" fill="#d0d0d0"/><path d="M7 0L14 7 7 14z" fill="#8a8a8a"/></svg>
<div style="left:817.2px;top:1417px;width:1.6px;height:643px;background:#3d8ee8;"></div>
<svg style="left:810px;top:1416px;" width="16" height="22" viewBox="0 0 16 22"><path d="M0 0h16v7L8 21 0 7z" fill="#3d8ee8"/></svg>
<svg style="left:3348px;top:1444px;" width="17" height="22" viewBox="0 0 17 22"><path d="M0 0h16.5v14L8.2 21 0 14z" fill="#bdbdbd"/></svg>
<svg style="left:3343px;top:1473px;" width="22" height="20" viewBox="0 0 22 20"><path d="M1 17L9 4" stroke="#bdbdbd" stroke-width="1.6"/><circle cx="10" cy="14" r="4" fill="#1e1e1e" stroke="#bdbdbd" stroke-width="1.6"/><rect x="13" y="5" width="8" height="9" fill="#bdbdbd"/></svg>
<div style="left:2px;top:2059.3px;width:965px;height:1.5px;background:#0e0e0e;"></div>
<div style="left:12px;top:2064px;width:18px;height:19px;background:#3a3a3a;border-radius:3px;"></div>
<svg style="left:13px;top:2065px;" width="17" height="17" viewBox="0 0 17 17"><rect x="1" y="1" width="10" height="10" fill="none" stroke="#a8a8a8" stroke-width="1.4"/><rect x="5" y="5" width="10" height="10" fill="#3a3a3a" stroke="#a8a8a8" stroke-width="1.4"/><rect x="8" y="8" width="5" height="5" fill="#a8a8a8"/></svg>
<svg style="left:40px;top:2063px;" width="18" height="20" viewBox="0 0 18 20"><circle cx="7" cy="7" r="6" fill="none" stroke="#a8a8a8" stroke-width="1.5"/><rect x="7" y="8" width="10" height="10" fill="#1e1e1e" stroke="#a8a8a8" stroke-width="1.5"/><rect x="10" y="11" width="4" height="4" fill="#a8a8a8"/></svg>
<svg style="left:68px;top:2063px;" width="18" height="20" viewBox="0 0 18 20"><path d="M5 1C2 1 3 6 1 9c2 3 1 9 4 9M13 1c3 0 2 5 4 8-2 3-1 9-4 9" fill="none" stroke="#a8a8a8" stroke-width="1.6"/><path d="M8 7h2v5H8z" fill="#a8a8a8"/></svg>
<svg style="left:96px;top:2063px;" width="20" height="19" viewBox="0 0 20 19"><path d="M1 17c0-8 4-13 9-13s7 5 7 10H1z" fill="#a8a8a8"/><circle cx="8" cy="10" r="3" fill="#1e1e1e"/><path d="M15 5l3-4M18 6l2-2" stroke="#a8a8a8" stroke-width="1.4"/></svg>
<div style="left:158.0px;top:2067px;font-size:16px;line-height:16px;color:#c8c8c8;white-space:pre;">Frame Render Time:</div>
<div style="left:311.7px;top:2067px;font-size:16px;line-height:16px;color:#3fcf8e;white-space:pre;font-weight:bold;">4ms</div>
<div style="left:412.0px;top:2067px;font-size:16px;line-height:16px;color:#c8c8c8;white-space:pre;transform:scaleX(1.0171);transform-origin:0 0;">Toggle Switches / Modes</div>
<svg style="left:815px;top:2070px;" width="14" height="8" viewBox="0 0 14 8"><path d="M0 7.5l4-4 2 2L9 0l5 7.5z" fill="#c8c8c8"/></svg>
<svg style="left:840px;top:2069px;" width="17" height="17" viewBox="0 0 17 17"><circle cx="8.2" cy="8.2" r="6.3" fill="none" stroke="#c8c8c8" stroke-width="2.6"/></svg>
<div style="left:862px;top:2076.5px;width:67px;height:2px;background:#4a4a4a;border-radius:1px;"></div>
<svg style="left:936px;top:2067px;" width="25" height="13" viewBox="0 0 25 13"><path d="M0 12.5l5-7 2 2.5L14 0l11 12.5z" fill="#c8c8c8"/></svg>
</body></html>
